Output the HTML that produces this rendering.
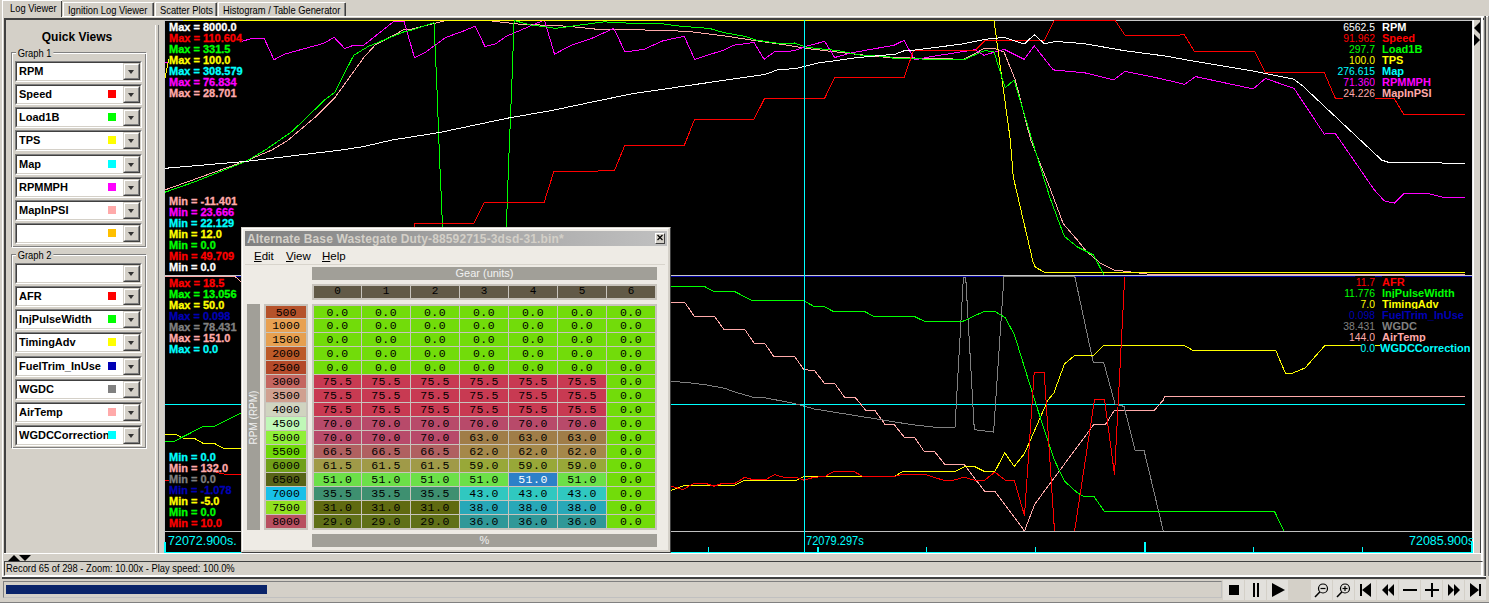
<!DOCTYPE html><html><head><meta charset="utf-8"><style>
html,body{margin:0;padding:0}
body{width:1489px;height:603px;overflow:hidden;background:#D4D0C8;position:relative;font-family:"Liberation Sans",sans-serif;font-size:11px}
body>div{position:absolute}
</style></head><body>
<div style="left:2px;top:0px;width:60px;height:17px;background:#D4D0C8;border-top:1px solid #FFFFFF;border-left:1px solid #FFFFFF;box-sizing:border-box"></div>
<div style="left:61px;top:1px;width:1px;height:16px;background:#404040"></div>
<div style="left:10px;top:2px;height:13px;line-height:13px;white-space:nowrap;font-size:11px;color:#000;transform:scaleX(.85);transform-origin:0 0;">Log Viewer</div>
<div style="left:63px;top:2px;width:90px;height:15px;border-top:1px solid #FFFFFF;border-left:1px solid #FFFFFF;box-sizing:border-box"></div>
<div style="left:153px;top:3px;width:1px;height:14px;background:#404040"></div>
<div style="left:152px;top:3px;width:1px;height:14px;background:#808080"></div>
<div style="left:68px;top:4px;height:13px;line-height:13px;white-space:nowrap;font-size:11px;color:#000;transform:scaleX(.85);transform-origin:0 0;">Ignition Log Viewer</div>
<div style="left:155px;top:2px;width:61px;height:15px;border-top:1px solid #FFFFFF;border-left:1px solid #FFFFFF;box-sizing:border-box"></div>
<div style="left:216px;top:3px;width:1px;height:14px;background:#404040"></div>
<div style="left:215px;top:3px;width:1px;height:14px;background:#808080"></div>
<div style="left:160px;top:4px;height:13px;line-height:13px;white-space:nowrap;font-size:11px;color:#000;transform:scaleX(.85);transform-origin:0 0;">Scatter Plots</div>
<div style="left:218px;top:2px;width:127px;height:15px;border-top:1px solid #FFFFFF;border-left:1px solid #FFFFFF;box-sizing:border-box"></div>
<div style="left:345px;top:3px;width:1px;height:14px;background:#404040"></div>
<div style="left:344px;top:3px;width:1px;height:14px;background:#808080"></div>
<div style="left:223px;top:4px;height:13px;line-height:13px;white-space:nowrap;font-size:11px;color:#000;transform:scaleX(.85);transform-origin:0 0;">Histogram / Table Generator</div>
<div style="left:62px;top:16px;width:1427px;height:1px;background:#FFFFFF"></div>
<div style="left:2px;top:17px;width:1px;height:560px;background:#FFFFFF"></div>
<div style="left:4px;top:18px;width:1482px;height:2px;background:#404040"></div>
<div style="left:4px;top:18px;width:2px;height:535px;background:#404040"></div>
<div style="left:6px;top:30px;height:14px;line-height:14px;white-space:nowrap;font-weight:bold;font-size:12px;width:142px;text-align:center;color:#000">Quick Views</div>
<div style="left:11px;top:52px;width:135px;height:195px;border:1px solid #808080;box-sizing:border-box"></div>
<div style="left:12px;top:53px;width:135px;height:195px;border:1px solid #FFFFFF;box-sizing:border-box;border-right:1px solid #FFFFFF"></div>
<div style="left:11px;top:52px;width:135px;height:195px;border-left:1px solid #808080;border-top:1px solid #808080;box-sizing:border-box"></div>
<div style="left:16px;top:47px;height:13px;line-height:13px;padding:0 2px;background:#D4D0C8;color:#000;transform:scaleX(.85);transform-origin:0 0;">Graph 1</div>
<div style="left:15px;top:61px;width:127px;height:21px;background:#FFFFFF;border-top:1px solid #808080;border-left:1px solid #808080;border-right:1px solid #FFFFFF;border-bottom:1px solid #FFFFFF;box-sizing:border-box"></div>
<div style="left:16px;top:62px;width:125px;height:19px;border-top:1px solid #404040;border-left:1px solid #404040;border-right:1px solid #D4D0C8;border-bottom:1px solid #D4D0C8;box-sizing:border-box"></div>
<div style="left:123px;top:63px;width:17px;height:17px;background:#D4D0C8;border-top:1px solid #D4D0C8;border-left:1px solid #D4D0C8;border-right:1px solid #404040;border-bottom:1px solid #404040;box-sizing:border-box"></div>
<div style="left:124px;top:64px;width:15px;height:15px;border-top:1px solid #FFFFFF;border-left:1px solid #FFFFFF;border-right:1px solid #808080;border-bottom:1px solid #808080;box-sizing:border-box"></div>
<div style="left:128px;top:70px;width:0;height:0;border-left:3.5px solid transparent;border-right:3.5px solid transparent;border-top:4px solid #333"></div>
<div style="left:19px;top:65px;height:13px;line-height:13px;white-space:nowrap;font-weight:bold;color:#000;width:103px;overflow:hidden">RPM</div>
<div style="left:15px;top:84px;width:127px;height:21px;background:#FFFFFF;border-top:1px solid #808080;border-left:1px solid #808080;border-right:1px solid #FFFFFF;border-bottom:1px solid #FFFFFF;box-sizing:border-box"></div>
<div style="left:16px;top:85px;width:125px;height:19px;border-top:1px solid #404040;border-left:1px solid #404040;border-right:1px solid #D4D0C8;border-bottom:1px solid #D4D0C8;box-sizing:border-box"></div>
<div style="left:123px;top:86px;width:17px;height:17px;background:#D4D0C8;border-top:1px solid #D4D0C8;border-left:1px solid #D4D0C8;border-right:1px solid #404040;border-bottom:1px solid #404040;box-sizing:border-box"></div>
<div style="left:124px;top:87px;width:15px;height:15px;border-top:1px solid #FFFFFF;border-left:1px solid #FFFFFF;border-right:1px solid #808080;border-bottom:1px solid #808080;box-sizing:border-box"></div>
<div style="left:128px;top:93px;width:0;height:0;border-left:3.5px solid transparent;border-right:3.5px solid transparent;border-top:4px solid #333"></div>
<div style="left:19px;top:88px;height:13px;line-height:13px;white-space:nowrap;font-weight:bold;color:#000;width:103px;overflow:hidden">Speed</div>
<div style="left:108px;top:90px;width:8px;height:8px;background:#FF0000"></div>
<div style="left:15px;top:107px;width:127px;height:21px;background:#FFFFFF;border-top:1px solid #808080;border-left:1px solid #808080;border-right:1px solid #FFFFFF;border-bottom:1px solid #FFFFFF;box-sizing:border-box"></div>
<div style="left:16px;top:108px;width:125px;height:19px;border-top:1px solid #404040;border-left:1px solid #404040;border-right:1px solid #D4D0C8;border-bottom:1px solid #D4D0C8;box-sizing:border-box"></div>
<div style="left:123px;top:109px;width:17px;height:17px;background:#D4D0C8;border-top:1px solid #D4D0C8;border-left:1px solid #D4D0C8;border-right:1px solid #404040;border-bottom:1px solid #404040;box-sizing:border-box"></div>
<div style="left:124px;top:110px;width:15px;height:15px;border-top:1px solid #FFFFFF;border-left:1px solid #FFFFFF;border-right:1px solid #808080;border-bottom:1px solid #808080;box-sizing:border-box"></div>
<div style="left:128px;top:116px;width:0;height:0;border-left:3.5px solid transparent;border-right:3.5px solid transparent;border-top:4px solid #333"></div>
<div style="left:19px;top:111px;height:13px;line-height:13px;white-space:nowrap;font-weight:bold;color:#000;width:103px;overflow:hidden">Load1B</div>
<div style="left:108px;top:113px;width:8px;height:8px;background:#00FF00"></div>
<div style="left:15px;top:130px;width:127px;height:21px;background:#FFFFFF;border-top:1px solid #808080;border-left:1px solid #808080;border-right:1px solid #FFFFFF;border-bottom:1px solid #FFFFFF;box-sizing:border-box"></div>
<div style="left:16px;top:131px;width:125px;height:19px;border-top:1px solid #404040;border-left:1px solid #404040;border-right:1px solid #D4D0C8;border-bottom:1px solid #D4D0C8;box-sizing:border-box"></div>
<div style="left:123px;top:132px;width:17px;height:17px;background:#D4D0C8;border-top:1px solid #D4D0C8;border-left:1px solid #D4D0C8;border-right:1px solid #404040;border-bottom:1px solid #404040;box-sizing:border-box"></div>
<div style="left:124px;top:133px;width:15px;height:15px;border-top:1px solid #FFFFFF;border-left:1px solid #FFFFFF;border-right:1px solid #808080;border-bottom:1px solid #808080;box-sizing:border-box"></div>
<div style="left:128px;top:139px;width:0;height:0;border-left:3.5px solid transparent;border-right:3.5px solid transparent;border-top:4px solid #333"></div>
<div style="left:19px;top:134px;height:13px;line-height:13px;white-space:nowrap;font-weight:bold;color:#000;width:103px;overflow:hidden">TPS</div>
<div style="left:108px;top:136px;width:8px;height:8px;background:#FFFF00"></div>
<div style="left:15px;top:154px;width:127px;height:21px;background:#FFFFFF;border-top:1px solid #808080;border-left:1px solid #808080;border-right:1px solid #FFFFFF;border-bottom:1px solid #FFFFFF;box-sizing:border-box"></div>
<div style="left:16px;top:155px;width:125px;height:19px;border-top:1px solid #404040;border-left:1px solid #404040;border-right:1px solid #D4D0C8;border-bottom:1px solid #D4D0C8;box-sizing:border-box"></div>
<div style="left:123px;top:156px;width:17px;height:17px;background:#D4D0C8;border-top:1px solid #D4D0C8;border-left:1px solid #D4D0C8;border-right:1px solid #404040;border-bottom:1px solid #404040;box-sizing:border-box"></div>
<div style="left:124px;top:157px;width:15px;height:15px;border-top:1px solid #FFFFFF;border-left:1px solid #FFFFFF;border-right:1px solid #808080;border-bottom:1px solid #808080;box-sizing:border-box"></div>
<div style="left:128px;top:163px;width:0;height:0;border-left:3.5px solid transparent;border-right:3.5px solid transparent;border-top:4px solid #333"></div>
<div style="left:19px;top:158px;height:13px;line-height:13px;white-space:nowrap;font-weight:bold;color:#000;width:103px;overflow:hidden">Map</div>
<div style="left:108px;top:160px;width:8px;height:8px;background:#00FFFF"></div>
<div style="left:15px;top:177px;width:127px;height:21px;background:#FFFFFF;border-top:1px solid #808080;border-left:1px solid #808080;border-right:1px solid #FFFFFF;border-bottom:1px solid #FFFFFF;box-sizing:border-box"></div>
<div style="left:16px;top:178px;width:125px;height:19px;border-top:1px solid #404040;border-left:1px solid #404040;border-right:1px solid #D4D0C8;border-bottom:1px solid #D4D0C8;box-sizing:border-box"></div>
<div style="left:123px;top:179px;width:17px;height:17px;background:#D4D0C8;border-top:1px solid #D4D0C8;border-left:1px solid #D4D0C8;border-right:1px solid #404040;border-bottom:1px solid #404040;box-sizing:border-box"></div>
<div style="left:124px;top:180px;width:15px;height:15px;border-top:1px solid #FFFFFF;border-left:1px solid #FFFFFF;border-right:1px solid #808080;border-bottom:1px solid #808080;box-sizing:border-box"></div>
<div style="left:128px;top:186px;width:0;height:0;border-left:3.5px solid transparent;border-right:3.5px solid transparent;border-top:4px solid #333"></div>
<div style="left:19px;top:181px;height:13px;line-height:13px;white-space:nowrap;font-weight:bold;color:#000;width:103px;overflow:hidden">RPMMPH</div>
<div style="left:108px;top:183px;width:8px;height:8px;background:#FF00FF"></div>
<div style="left:15px;top:200px;width:127px;height:21px;background:#FFFFFF;border-top:1px solid #808080;border-left:1px solid #808080;border-right:1px solid #FFFFFF;border-bottom:1px solid #FFFFFF;box-sizing:border-box"></div>
<div style="left:16px;top:201px;width:125px;height:19px;border-top:1px solid #404040;border-left:1px solid #404040;border-right:1px solid #D4D0C8;border-bottom:1px solid #D4D0C8;box-sizing:border-box"></div>
<div style="left:123px;top:202px;width:17px;height:17px;background:#D4D0C8;border-top:1px solid #D4D0C8;border-left:1px solid #D4D0C8;border-right:1px solid #404040;border-bottom:1px solid #404040;box-sizing:border-box"></div>
<div style="left:124px;top:203px;width:15px;height:15px;border-top:1px solid #FFFFFF;border-left:1px solid #FFFFFF;border-right:1px solid #808080;border-bottom:1px solid #808080;box-sizing:border-box"></div>
<div style="left:128px;top:209px;width:0;height:0;border-left:3.5px solid transparent;border-right:3.5px solid transparent;border-top:4px solid #333"></div>
<div style="left:19px;top:204px;height:13px;line-height:13px;white-space:nowrap;font-weight:bold;color:#000;width:103px;overflow:hidden">MapInPSI</div>
<div style="left:108px;top:206px;width:8px;height:8px;background:#FFAAAA"></div>
<div style="left:15px;top:223px;width:127px;height:21px;background:#FFFFFF;border-top:1px solid #808080;border-left:1px solid #808080;border-right:1px solid #FFFFFF;border-bottom:1px solid #FFFFFF;box-sizing:border-box"></div>
<div style="left:16px;top:224px;width:125px;height:19px;border-top:1px solid #404040;border-left:1px solid #404040;border-right:1px solid #D4D0C8;border-bottom:1px solid #D4D0C8;box-sizing:border-box"></div>
<div style="left:123px;top:225px;width:17px;height:17px;background:#D4D0C8;border-top:1px solid #D4D0C8;border-left:1px solid #D4D0C8;border-right:1px solid #404040;border-bottom:1px solid #404040;box-sizing:border-box"></div>
<div style="left:124px;top:226px;width:15px;height:15px;border-top:1px solid #FFFFFF;border-left:1px solid #FFFFFF;border-right:1px solid #808080;border-bottom:1px solid #808080;box-sizing:border-box"></div>
<div style="left:128px;top:232px;width:0;height:0;border-left:3.5px solid transparent;border-right:3.5px solid transparent;border-top:4px solid #333"></div>
<div style="left:108px;top:229px;width:8px;height:8px;background:#FFC000"></div>
<div style="left:11px;top:254px;width:135px;height:194px;border:1px solid #808080;box-sizing:border-box"></div>
<div style="left:12px;top:255px;width:135px;height:194px;border:1px solid #FFFFFF;box-sizing:border-box;border-right:1px solid #FFFFFF"></div>
<div style="left:11px;top:254px;width:135px;height:194px;border-left:1px solid #808080;border-top:1px solid #808080;box-sizing:border-box"></div>
<div style="left:16px;top:249px;height:13px;line-height:13px;padding:0 2px;background:#D4D0C8;color:#000;transform:scaleX(.85);transform-origin:0 0;">Graph 2</div>
<div style="left:15px;top:263px;width:127px;height:21px;background:#FFFFFF;border-top:1px solid #808080;border-left:1px solid #808080;border-right:1px solid #FFFFFF;border-bottom:1px solid #FFFFFF;box-sizing:border-box"></div>
<div style="left:16px;top:264px;width:125px;height:19px;border-top:1px solid #404040;border-left:1px solid #404040;border-right:1px solid #D4D0C8;border-bottom:1px solid #D4D0C8;box-sizing:border-box"></div>
<div style="left:123px;top:265px;width:17px;height:17px;background:#D4D0C8;border-top:1px solid #D4D0C8;border-left:1px solid #D4D0C8;border-right:1px solid #404040;border-bottom:1px solid #404040;box-sizing:border-box"></div>
<div style="left:124px;top:266px;width:15px;height:15px;border-top:1px solid #FFFFFF;border-left:1px solid #FFFFFF;border-right:1px solid #808080;border-bottom:1px solid #808080;box-sizing:border-box"></div>
<div style="left:128px;top:272px;width:0;height:0;border-left:3.5px solid transparent;border-right:3.5px solid transparent;border-top:4px solid #333"></div>
<div style="left:15px;top:286px;width:127px;height:21px;background:#FFFFFF;border-top:1px solid #808080;border-left:1px solid #808080;border-right:1px solid #FFFFFF;border-bottom:1px solid #FFFFFF;box-sizing:border-box"></div>
<div style="left:16px;top:287px;width:125px;height:19px;border-top:1px solid #404040;border-left:1px solid #404040;border-right:1px solid #D4D0C8;border-bottom:1px solid #D4D0C8;box-sizing:border-box"></div>
<div style="left:123px;top:288px;width:17px;height:17px;background:#D4D0C8;border-top:1px solid #D4D0C8;border-left:1px solid #D4D0C8;border-right:1px solid #404040;border-bottom:1px solid #404040;box-sizing:border-box"></div>
<div style="left:124px;top:289px;width:15px;height:15px;border-top:1px solid #FFFFFF;border-left:1px solid #FFFFFF;border-right:1px solid #808080;border-bottom:1px solid #808080;box-sizing:border-box"></div>
<div style="left:128px;top:295px;width:0;height:0;border-left:3.5px solid transparent;border-right:3.5px solid transparent;border-top:4px solid #333"></div>
<div style="left:19px;top:290px;height:13px;line-height:13px;white-space:nowrap;font-weight:bold;color:#000;width:103px;overflow:hidden">AFR</div>
<div style="left:108px;top:292px;width:8px;height:8px;background:#FF0000"></div>
<div style="left:15px;top:309px;width:127px;height:21px;background:#FFFFFF;border-top:1px solid #808080;border-left:1px solid #808080;border-right:1px solid #FFFFFF;border-bottom:1px solid #FFFFFF;box-sizing:border-box"></div>
<div style="left:16px;top:310px;width:125px;height:19px;border-top:1px solid #404040;border-left:1px solid #404040;border-right:1px solid #D4D0C8;border-bottom:1px solid #D4D0C8;box-sizing:border-box"></div>
<div style="left:123px;top:311px;width:17px;height:17px;background:#D4D0C8;border-top:1px solid #D4D0C8;border-left:1px solid #D4D0C8;border-right:1px solid #404040;border-bottom:1px solid #404040;box-sizing:border-box"></div>
<div style="left:124px;top:312px;width:15px;height:15px;border-top:1px solid #FFFFFF;border-left:1px solid #FFFFFF;border-right:1px solid #808080;border-bottom:1px solid #808080;box-sizing:border-box"></div>
<div style="left:128px;top:318px;width:0;height:0;border-left:3.5px solid transparent;border-right:3.5px solid transparent;border-top:4px solid #333"></div>
<div style="left:19px;top:313px;height:13px;line-height:13px;white-space:nowrap;font-weight:bold;color:#000;width:103px;overflow:hidden">InjPulseWidth</div>
<div style="left:108px;top:315px;width:8px;height:8px;background:#00FF00"></div>
<div style="left:15px;top:332px;width:127px;height:21px;background:#FFFFFF;border-top:1px solid #808080;border-left:1px solid #808080;border-right:1px solid #FFFFFF;border-bottom:1px solid #FFFFFF;box-sizing:border-box"></div>
<div style="left:16px;top:333px;width:125px;height:19px;border-top:1px solid #404040;border-left:1px solid #404040;border-right:1px solid #D4D0C8;border-bottom:1px solid #D4D0C8;box-sizing:border-box"></div>
<div style="left:123px;top:334px;width:17px;height:17px;background:#D4D0C8;border-top:1px solid #D4D0C8;border-left:1px solid #D4D0C8;border-right:1px solid #404040;border-bottom:1px solid #404040;box-sizing:border-box"></div>
<div style="left:124px;top:335px;width:15px;height:15px;border-top:1px solid #FFFFFF;border-left:1px solid #FFFFFF;border-right:1px solid #808080;border-bottom:1px solid #808080;box-sizing:border-box"></div>
<div style="left:128px;top:341px;width:0;height:0;border-left:3.5px solid transparent;border-right:3.5px solid transparent;border-top:4px solid #333"></div>
<div style="left:19px;top:336px;height:13px;line-height:13px;white-space:nowrap;font-weight:bold;color:#000;width:103px;overflow:hidden">TimingAdv</div>
<div style="left:108px;top:338px;width:8px;height:8px;background:#FFFF00"></div>
<div style="left:15px;top:356px;width:127px;height:21px;background:#FFFFFF;border-top:1px solid #808080;border-left:1px solid #808080;border-right:1px solid #FFFFFF;border-bottom:1px solid #FFFFFF;box-sizing:border-box"></div>
<div style="left:16px;top:357px;width:125px;height:19px;border-top:1px solid #404040;border-left:1px solid #404040;border-right:1px solid #D4D0C8;border-bottom:1px solid #D4D0C8;box-sizing:border-box"></div>
<div style="left:123px;top:358px;width:17px;height:17px;background:#D4D0C8;border-top:1px solid #D4D0C8;border-left:1px solid #D4D0C8;border-right:1px solid #404040;border-bottom:1px solid #404040;box-sizing:border-box"></div>
<div style="left:124px;top:359px;width:15px;height:15px;border-top:1px solid #FFFFFF;border-left:1px solid #FFFFFF;border-right:1px solid #808080;border-bottom:1px solid #808080;box-sizing:border-box"></div>
<div style="left:128px;top:365px;width:0;height:0;border-left:3.5px solid transparent;border-right:3.5px solid transparent;border-top:4px solid #333"></div>
<div style="left:19px;top:360px;height:13px;line-height:13px;white-space:nowrap;font-weight:bold;color:#000;width:103px;overflow:hidden">FuelTrim_InUse</div>
<div style="left:108px;top:362px;width:8px;height:8px;background:#0000B4"></div>
<div style="left:15px;top:379px;width:127px;height:21px;background:#FFFFFF;border-top:1px solid #808080;border-left:1px solid #808080;border-right:1px solid #FFFFFF;border-bottom:1px solid #FFFFFF;box-sizing:border-box"></div>
<div style="left:16px;top:380px;width:125px;height:19px;border-top:1px solid #404040;border-left:1px solid #404040;border-right:1px solid #D4D0C8;border-bottom:1px solid #D4D0C8;box-sizing:border-box"></div>
<div style="left:123px;top:381px;width:17px;height:17px;background:#D4D0C8;border-top:1px solid #D4D0C8;border-left:1px solid #D4D0C8;border-right:1px solid #404040;border-bottom:1px solid #404040;box-sizing:border-box"></div>
<div style="left:124px;top:382px;width:15px;height:15px;border-top:1px solid #FFFFFF;border-left:1px solid #FFFFFF;border-right:1px solid #808080;border-bottom:1px solid #808080;box-sizing:border-box"></div>
<div style="left:128px;top:388px;width:0;height:0;border-left:3.5px solid transparent;border-right:3.5px solid transparent;border-top:4px solid #333"></div>
<div style="left:19px;top:383px;height:13px;line-height:13px;white-space:nowrap;font-weight:bold;color:#000;width:103px;overflow:hidden">WGDC</div>
<div style="left:108px;top:385px;width:8px;height:8px;background:#808080"></div>
<div style="left:15px;top:402px;width:127px;height:21px;background:#FFFFFF;border-top:1px solid #808080;border-left:1px solid #808080;border-right:1px solid #FFFFFF;border-bottom:1px solid #FFFFFF;box-sizing:border-box"></div>
<div style="left:16px;top:403px;width:125px;height:19px;border-top:1px solid #404040;border-left:1px solid #404040;border-right:1px solid #D4D0C8;border-bottom:1px solid #D4D0C8;box-sizing:border-box"></div>
<div style="left:123px;top:404px;width:17px;height:17px;background:#D4D0C8;border-top:1px solid #D4D0C8;border-left:1px solid #D4D0C8;border-right:1px solid #404040;border-bottom:1px solid #404040;box-sizing:border-box"></div>
<div style="left:124px;top:405px;width:15px;height:15px;border-top:1px solid #FFFFFF;border-left:1px solid #FFFFFF;border-right:1px solid #808080;border-bottom:1px solid #808080;box-sizing:border-box"></div>
<div style="left:128px;top:411px;width:0;height:0;border-left:3.5px solid transparent;border-right:3.5px solid transparent;border-top:4px solid #333"></div>
<div style="left:19px;top:406px;height:13px;line-height:13px;white-space:nowrap;font-weight:bold;color:#000;width:103px;overflow:hidden">AirTemp</div>
<div style="left:108px;top:408px;width:8px;height:8px;background:#FFAAAA"></div>
<div style="left:15px;top:425px;width:127px;height:21px;background:#FFFFFF;border-top:1px solid #808080;border-left:1px solid #808080;border-right:1px solid #FFFFFF;border-bottom:1px solid #FFFFFF;box-sizing:border-box"></div>
<div style="left:16px;top:426px;width:125px;height:19px;border-top:1px solid #404040;border-left:1px solid #404040;border-right:1px solid #D4D0C8;border-bottom:1px solid #D4D0C8;box-sizing:border-box"></div>
<div style="left:123px;top:427px;width:17px;height:17px;background:#D4D0C8;border-top:1px solid #D4D0C8;border-left:1px solid #D4D0C8;border-right:1px solid #404040;border-bottom:1px solid #404040;box-sizing:border-box"></div>
<div style="left:124px;top:428px;width:15px;height:15px;border-top:1px solid #FFFFFF;border-left:1px solid #FFFFFF;border-right:1px solid #808080;border-bottom:1px solid #808080;box-sizing:border-box"></div>
<div style="left:128px;top:434px;width:0;height:0;border-left:3.5px solid transparent;border-right:3.5px solid transparent;border-top:4px solid #333"></div>
<div style="left:19px;top:429px;height:13px;line-height:13px;white-space:nowrap;font-weight:bold;color:#000;width:103px;overflow:hidden">WGDCCorrection</div>
<div style="left:108px;top:431px;width:8px;height:8px;background:#00FFFF"></div>
<div style="left:155px;top:25px;width:1px;height:528px;background:#FFFFFF"></div>
<div style="left:158px;top:25px;width:1px;height:528px;background:#808080"></div>
<div style="left:165px;top:20px;width:1307px;height:533px;background:#000"></div>
<div style="left:164px;top:20px;width:1px;height:533px;background:#C8C8C8"></div>
<div style="left:165px;top:20px;width:1308px;height:1px;background:#C8C8C8"></div>
<div style="left:165px;top:531px;width:1308px;height:1px;background:#C0C0C0"></div>
<div style="left:165px;top:275px;width:1308px;height:1px;background:#C8C8C8"></div>
<div style="left:165px;top:276px;width:1308px;height:1px;background:#0000A0"></div>
<div style="left:1472px;top:20px;width:1px;height:533px;background:#E8E8E8"></div>
<div style="left:1473px;top:20px;width:1px;height:533px;background:#FFFFFF"></div>
<div style="left:1480px;top:20px;width:1px;height:533px;background:#404040"></div>
<div style="left:1481px;top:16px;width:2px;height:560px;background:#FFFFFF"></div>
<div style="left:1484px;top:16px;width:1px;height:560px;background:#808080"></div>
<div style="left:1488px;top:16px;width:1px;height:560px;background:#808080"></div>
<div style="left:1485px;top:16px;width:1px;height:563px;background:#404040"></div>
<div style="left:165px;top:16px;width:1316px;height:1px;background:#FFFFFF"></div>
<svg style="left:0;top:0;position:absolute" width="1489" height="603" shape-rendering="crispEdges">
<defs><clipPath id="c1"><rect x="165" y="20" width="1300" height="255"/></clipPath><clipPath id="c2"><rect x="165" y="276" width="1300" height="255"/></clipPath></defs>
<polyline points="165.0,189.9 245.9,160.9 272.0,150.0 287.7,140.4 316.8,115.8 334.7,97.9 363.8,57.5 375.0,45.2 404.0,29.6 410.0,29.6 445.8,20.6 488.4,20.6 517.5,24.0 566.8,26.2 600.4,29.6 665.0,30.2 691.4,31.8 727.2,36.3 756.3,40.8 787.7,45.2 807.8,48.6 861.6,54.9 884.0,57.1 915.0,58.0 963.8,59.3 985.0,48.1 995.1,48.6 1004.0,52.0 1015.3,80.0 1030.7,140.0 1049.3,186.4 1063.2,223.6 1077.1,239.8 1086.4,251.4 1100.3,263.0 1114.3,270.0 1149.1,274.2 1465.0,274.5" fill="none" stroke="#FFAAAA" stroke-width="1" clip-path="url(#c1)"/>
<polyline points="165.0,63.0 167.8,62.0 227.2,45.2 254.0,38.0 264.0,38.0 274.0,59.8 284.3,54.2 323.5,43.4 334.2,37.4 344.8,48.6 353.7,45.2 363.8,45.2 394.0,21.3 404.0,21.3 414.5,57.6 425.7,52.0 445.8,37.4 461.5,31.8 475.0,26.2 485.0,46.4 495.1,44.1 506.3,36.3 544.4,20.0 554.5,54.2 571.3,45.2 591.4,38.5 613.8,28.4 625.0,52.0 644.0,49.3 663.0,40.8 684.2,36.3 694.7,59.3 725.0,49.7 733.9,45.2 754.1,42.5 764.1,59.3 774.2,52.0 794.4,50.8 805.6,46.4 824.6,41.4 834.7,57.5 850.4,53.1 894.0,45.2 904.1,40.3 914.5,59.8 932.4,56.4 975.0,49.7 983.9,55.3 1004.0,49.3 1024.2,59.3 1034.3,45.9 1053.3,69.9 1084.7,72.8 1113.8,79.9 1125.0,71.4 1160.0,78.5 1184.6,84.3 1195.6,76.6 1253.1,88.9 1265.4,78.5 1294.1,88.4 1324.2,134.1 1335.2,133.3 1374.3,189.9 1384.3,200.9 1394.2,203.1 1404.1,193.2 1426.2,193.2 1442.8,197.2 1464.9,197.2" fill="none" stroke="#FF00FF" stroke-width="1" clip-path="url(#c1)"/>
<polyline points="165.0,77.7 169.0,58.7 184.0,20.5 994.0,20.5 1010.3,140.0 1013.3,177.1 1033.0,261.9 1035.3,267.2 1044.6,272.3 1465.0,273.0" fill="none" stroke="#FFFF00" stroke-width="1" clip-path="url(#c1)"/>
<polyline points="165.0,192.2 194.8,181.8 245.9,161.4 265.3,150.0 292.0,131.5 325.7,99.0 334.7,92.3 353.7,55.3 368.3,46.4 380.6,41.4 404.0,31.8 410.0,30.7 434.0,22.8 436.9,86.7 439.7,162.0 440.9,188.7 442.5,227.0 444.0,275.0 505.0,275.0 506.3,227.0 507.0,209.6 508.7,160.9 511.9,82.2 514.1,20.6 531.0,25.0 548.9,27.3 555.6,28.4 604.8,21.7 611.6,22.8 660.0,23.5 680.2,26.2 709.3,28.4 725.0,32.9 745.1,36.3 756.3,40.1 780.9,43.7 794.4,43.0 807.8,47.5 839.2,50.8 861.6,55.3 888.4,56.4 893.0,58.2 910.8,58.2 932.4,59.8 963.8,59.8 985.0,50.4 994.0,52.0 1005.2,87.8 1014.1,80.0 1032.0,140.0 1049.3,195.7 1058.6,221.2 1064.4,236.3 1077.1,246.8 1093.4,254.9 1103.8,274.6" fill="none" stroke="#00FF00" stroke-width="1" clip-path="url(#c1)"/>
<polyline points="413.5,230.0 415.0,223.6 473.8,223.1 484.3,202.2 544.2,202.2 553.9,171.3 614.3,170.9 624.7,145.6 684.2,145.6 694.7,119.1 754.1,119.1 764.6,98.3 824.6,98.3 834.7,77.7 904.1,77.7 913.3,50.8 975.0,50.8 985.0,40.3 1044.4,40.3 1054.5,20.0 1114.9,20.0 1125.0,35.2 1184.6,35.0 1194.2,51.1 1254.4,51.1 1265.4,72.5 1324.2,72.5 1335.2,98.0 1394.0,98.0 1403.6,114.1 1465.2,114.1" fill="none" stroke="#FF0000" stroke-width="1" clip-path="url(#c1)"/>
<polyline points="165.0,168.3 245.9,161.4 341.4,150.0 363.8,146.5 392.0,140.0 439.0,132.6 508.5,118.0 553.3,110.2 595.9,101.2 634.0,93.4 665.0,89.0 695.8,84.4 765.3,74.4 778.7,69.4 794.4,68.8 816.8,63.2 857.1,57.6 895.2,54.2 904.1,50.8 915.0,50.0 961.5,44.1 986.1,39.2 1004.0,37.4 1024.2,44.1 1034.3,34.7 1044.4,43.7 1055.6,41.4 1084.7,43.7 1122.8,50.4 1165.0,56.0 1195.6,61.5 1253.1,71.1 1294.1,79.3 1302.3,85.6 1381.7,160.1 1390.0,162.8 1433.7,162.8 1465.2,163.6" fill="none" stroke="#FFFFFF" stroke-width="1" clip-path="url(#c1)"/>
<line x1="165" y1="404.5" x2="1465" y2="404.5" stroke="#00FFFF"/>
<polyline points="165.0,276.5 235.0,276.5 245.0,285.0 600.0,290.0 671.1,302.0 684.4,302.0 694.4,316.4 714.5,316.4 723.8,329.2 744.7,329.2 754.0,343.1 764.5,343.1 773.7,356.4 794.6,356.4 803.9,369.8 814.4,370.3 824.3,383.3 834.6,383.3 844.5,397.2 855.0,397.2 865.8,410.3 874.8,410.3 885.0,424.4 894.0,424.4 904.3,437.3 914.6,437.3 924.1,451.4 934.4,451.4 944.7,464.3 964.0,464.3 984.6,491.3 994.9,491.3 1024.5,531.0 1034.7,504.2 1093.9,424.4 1105.5,424.4 1114.5,410.3 1154.3,410.3 1163.3,400.0 1164.7,396.7 1465.0,396.7" fill="none" stroke="#FFAAAA" stroke-width="1" clip-path="url(#c2)"/>
<polyline points="600.0,370.0 671.1,381.4 687.9,382.6 706.4,384.9 725.0,388.4 734.3,391.9 752.9,397.2 764.5,397.7 794.6,403.5 814.3,409.0 883.8,420.1 910.0,424.4 933.1,427.0 955.0,427.0 963.4,277.0 965.7,277.0 974.3,429.6 993.6,432.1 1004.0,276.5 1074.8,276.5 1093.4,362.9 1103.8,362.9 1115.0,404.0 1124.0,406.4 1135.0,450.2 1144.0,450.2 1163.3,531.0" fill="none" stroke="#808080" stroke-width="1" clip-path="url(#c2)"/>
<polyline points="165.0,434.5 175.7,434.5 183.9,438.4 194.3,438.4 203.3,443.4 214.5,443.4 223.4,448.4 240.6,448.4 300.0,460.0 670.8,490.5 684.4,485.4 734.6,485.4 743.6,480.5 796.3,480.5 804.0,476.6 894.0,476.6 903.0,471.5 955.0,471.5 965.3,466.4 974.3,466.4 984.6,471.5 994.9,471.5 1004.7,452.7 1014.2,466.4 1024.5,453.5 1047.9,400.0 1053.9,393.0 1064.4,364.0 1074.8,355.4 1093.4,355.4 1103.8,345.4 1184.0,345.4 1193.1,350.4 1275.8,350.4 1285.3,373.0 1293.0,373.0 1305.0,368.0 1325.0,345.4 1465.0,345.4" fill="none" stroke="#FFFF00" stroke-width="1" clip-path="url(#c2)"/>
<polyline points="165.0,441.3 174.2,441.3 203.3,426.4 214.5,426.4 240.6,413.3 300.0,390.0 671.1,286.2 704.1,286.2 713.4,291.4 734.3,291.4 752.9,300.9 803.9,300.9 813.2,306.0 823.6,306.0 832.9,311.3 864.3,311.3 873.6,316.4 914.2,316.4 923.9,321.1 963.4,321.1 984.3,311.3 994.7,311.3 1005.2,317.6 1014.5,335.0 1034.6,400.0 1054.0,459.2 1064.3,481.0 1077.2,492.6 1083.6,496.4 1093.9,496.4 1104.2,511.1 1274.4,511.1 1283.8,531.0" fill="none" stroke="#00FF00" stroke-width="1" clip-path="url(#c2)"/>
<polyline points="216.0,472.5 224.0,474.0 241.0,474.0 300.0,480.0 670.8,486.2 683.1,489.5 693.4,483.6 706.3,483.6 714.0,486.2 721.7,483.6 734.6,483.6 744.9,477.2 752.6,479.7 765.5,479.7 774.5,474.6 783.5,477.2 796.3,477.2 804.0,480.2 814.3,477.2 824.6,476.6 834.9,471.0 852.9,471.0 863.2,476.6 894.0,476.6 903.0,474.1 925.4,474.6 943.4,480.2 953.7,480.2 964.0,477.2 974.3,480.2 984.6,480.2 994.9,472.0 1005.2,480.2 1014.2,480.2 1024.5,515.7 1034.2,372.1 1044.2,372.1 1054.5,531.0 1074.6,531.0 1094.5,399.5 1104.5,399.5 1114.5,474.6 1124.7,277.0" fill="none" stroke="#FF0000" stroke-width="1" clip-path="url(#c2)"/>
<polyline points="165.0,480.5 169.0,480.5" fill="none" stroke="#FF0000" stroke-width="1" clip-path="url(#c2)"/>
<line x1="804.5" y1="20" x2="804.5" y2="553" stroke="#00FFFF"/>
<line x1="165" y1="552.5" x2="1473" y2="552.5" stroke="#00FFFF"/>
<line x1="165" y1="542" x2="165" y2="553" stroke="#00FFFF" stroke-width="2"/>
<line x1="708.5" y1="547" x2="708.5" y2="553" stroke="#00FFFF" stroke-width="1"/>
<line x1="817.5" y1="547" x2="817.5" y2="553" stroke="#00FFFF" stroke-width="2"/>
<line x1="926.5" y1="547" x2="926.5" y2="553" stroke="#00FFFF" stroke-width="1"/>
<line x1="1035.5" y1="547" x2="1035.5" y2="553" stroke="#00FFFF" stroke-width="1"/>
<line x1="1144.5" y1="542" x2="1144.5" y2="553" stroke="#00FFFF" stroke-width="2"/>
<line x1="1253.5" y1="547" x2="1253.5" y2="553" stroke="#00FFFF" stroke-width="1"/>
<line x1="1362.5" y1="547" x2="1362.5" y2="553" stroke="#00FFFF" stroke-width="1"/>
<line x1="1472" y1="542" x2="1472" y2="553" stroke="#00FFFF" stroke-width="2"/>
</svg>
<div style="left:169px;top:20.8px;height:13px;line-height:13px;white-space:nowrap;color:#FFFFFF;font-weight:bold;-webkit-text-stroke:0.3px #FFFFFF;background:#000;">Max = 8000.0</div>
<div style="left:169px;top:31.799999999999997px;height:13px;line-height:13px;white-space:nowrap;color:#FF0000;font-weight:bold;-webkit-text-stroke:0.3px #FF0000;background:#000;">Max = 110.604</div>
<div style="left:169px;top:42.8px;height:13px;line-height:13px;white-space:nowrap;color:#00FF00;font-weight:bold;-webkit-text-stroke:0.3px #00FF00;background:#000;">Max = 331.5</div>
<div style="left:169px;top:53.8px;height:13px;line-height:13px;white-space:nowrap;color:#FFFF00;font-weight:bold;-webkit-text-stroke:0.3px #FFFF00;background:#000;">Max = 100.0</div>
<div style="left:169px;top:64.8px;height:13px;line-height:13px;white-space:nowrap;color:#00FFFF;font-weight:bold;-webkit-text-stroke:0.3px #00FFFF;background:#000;">Max = 308.579</div>
<div style="left:169px;top:75.8px;height:13px;line-height:13px;white-space:nowrap;color:#FF00FF;font-weight:bold;-webkit-text-stroke:0.3px #FF00FF;background:#000;">Max = 76.834</div>
<div style="left:169px;top:86.8px;height:13px;line-height:13px;white-space:nowrap;color:#FFAAAA;font-weight:bold;-webkit-text-stroke:0.3px #FFAAAA;background:#000;">Max = 28.701</div>
<div style="left:169px;top:195.3px;height:13px;line-height:13px;white-space:nowrap;color:#FFAAAA;font-weight:bold;-webkit-text-stroke:0.3px #FFAAAA;background:#000;">Min = -11.401</div>
<div style="left:169px;top:206.3px;height:13px;line-height:13px;white-space:nowrap;color:#FF00FF;font-weight:bold;-webkit-text-stroke:0.3px #FF00FF;background:#000;">Min = 23.666</div>
<div style="left:169px;top:217.3px;height:13px;line-height:13px;white-space:nowrap;color:#00FFFF;font-weight:bold;-webkit-text-stroke:0.3px #00FFFF;background:#000;">Min = 22.129</div>
<div style="left:169px;top:228.3px;height:13px;line-height:13px;white-space:nowrap;color:#FFFF00;font-weight:bold;-webkit-text-stroke:0.3px #FFFF00;background:#000;">Min = 12.0</div>
<div style="left:169px;top:239.3px;height:13px;line-height:13px;white-space:nowrap;color:#00FF00;font-weight:bold;-webkit-text-stroke:0.3px #00FF00;background:#000;">Min = 0.0</div>
<div style="left:169px;top:250.3px;height:13px;line-height:13px;white-space:nowrap;color:#FF0000;font-weight:bold;-webkit-text-stroke:0.3px #FF0000;background:#000;">Min = 49.709</div>
<div style="left:169px;top:261.3px;height:13px;line-height:13px;white-space:nowrap;color:#FFFFFF;font-weight:bold;-webkit-text-stroke:0.3px #FFFFFF;background:#000;">Min = 0.0</div>
<div style="left:169px;top:276.5px;height:13px;line-height:13px;white-space:nowrap;color:#FF0000;font-weight:bold;-webkit-text-stroke:0.3px #FF0000;background:#000;">Max = 18.5</div>
<div style="left:169px;top:287.5px;height:13px;line-height:13px;white-space:nowrap;color:#00FF00;font-weight:bold;-webkit-text-stroke:0.3px #00FF00;background:#000;">Max = 13.056</div>
<div style="left:169px;top:298.5px;height:13px;line-height:13px;white-space:nowrap;color:#FFFF00;font-weight:bold;-webkit-text-stroke:0.3px #FFFF00;background:#000;">Max = 50.0</div>
<div style="left:169px;top:309.5px;height:13px;line-height:13px;white-space:nowrap;color:#0000B4;font-weight:bold;-webkit-text-stroke:0.3px #0000B4;background:#000;">Max = 0.098</div>
<div style="left:169px;top:320.5px;height:13px;line-height:13px;white-space:nowrap;color:#808080;font-weight:bold;-webkit-text-stroke:0.3px #808080;background:#000;">Max = 78.431</div>
<div style="left:169px;top:331.5px;height:13px;line-height:13px;white-space:nowrap;color:#FFAAAA;font-weight:bold;-webkit-text-stroke:0.3px #FFAAAA;background:#000;">Max = 151.0</div>
<div style="left:169px;top:342.5px;height:13px;line-height:13px;white-space:nowrap;color:#00FFFF;font-weight:bold;-webkit-text-stroke:0.3px #00FFFF;background:#000;">Max = 0.0</div>
<div style="left:169px;top:451.4px;height:13px;line-height:13px;white-space:nowrap;color:#00FFFF;font-weight:bold;-webkit-text-stroke:0.3px #00FFFF;">Min = 0.0</div>
<div style="left:169px;top:462.4px;height:13px;line-height:13px;white-space:nowrap;color:#FFAAAA;font-weight:bold;-webkit-text-stroke:0.3px #FFAAAA;">Min = 132.0</div>
<div style="left:169px;top:473.4px;height:13px;line-height:13px;white-space:nowrap;color:#808080;font-weight:bold;-webkit-text-stroke:0.3px #808080;">Min = 0.0</div>
<div style="left:169px;top:484.4px;height:13px;line-height:13px;white-space:nowrap;color:#0000B4;font-weight:bold;-webkit-text-stroke:0.3px #0000B4;">Min = -1.078</div>
<div style="left:169px;top:495.4px;height:13px;line-height:13px;white-space:nowrap;color:#FFFF00;font-weight:bold;-webkit-text-stroke:0.3px #FFFF00;">Min = -5.0</div>
<div style="left:169px;top:506.4px;height:13px;line-height:13px;white-space:nowrap;color:#00FF00;font-weight:bold;-webkit-text-stroke:0.3px #00FF00;">Min = 0.0</div>
<div style="left:169px;top:517.4px;height:13px;line-height:13px;white-space:nowrap;color:#FF0000;font-weight:bold;-webkit-text-stroke:0.3px #FF0000;">Min = 10.0</div>
<div style="left:1274.5px;top:20.8px;height:13px;line-height:13px;white-space:nowrap;color:#FFFFFF;width:100px;text-align:right;transform:scaleX(.94);transform-origin:100% 0"><span style="background:#000">6562.5</span></div>
<div style="left:1382px;top:20.8px;height:13px;line-height:13px;white-space:nowrap;color:#FFFFFF;font-weight:bold">RPM</div>
<div style="left:1274.5px;top:31.799999999999997px;height:13px;line-height:13px;white-space:nowrap;color:#FF0000;width:100px;text-align:right;transform:scaleX(.94);transform-origin:100% 0"><span style="background:#000">91.962</span></div>
<div style="left:1382px;top:31.799999999999997px;height:13px;line-height:13px;white-space:nowrap;color:#FF0000;font-weight:bold">Speed</div>
<div style="left:1274.5px;top:42.8px;height:13px;line-height:13px;white-space:nowrap;color:#00FF00;width:100px;text-align:right;transform:scaleX(.94);transform-origin:100% 0"><span style="background:#000">297.7</span></div>
<div style="left:1382px;top:42.8px;height:13px;line-height:13px;white-space:nowrap;color:#00FF00;font-weight:bold">Load1B</div>
<div style="left:1274.5px;top:53.8px;height:13px;line-height:13px;white-space:nowrap;color:#FFFF00;width:100px;text-align:right;transform:scaleX(.94);transform-origin:100% 0"><span style="background:#000">100.0</span></div>
<div style="left:1382px;top:53.8px;height:13px;line-height:13px;white-space:nowrap;color:#FFFF00;font-weight:bold">TPS</div>
<div style="left:1274.5px;top:64.8px;height:13px;line-height:13px;white-space:nowrap;color:#00FFFF;width:100px;text-align:right;transform:scaleX(.94);transform-origin:100% 0"><span style="background:#000">276.615</span></div>
<div style="left:1382px;top:64.8px;height:13px;line-height:13px;white-space:nowrap;color:#00FFFF;font-weight:bold">Map</div>
<div style="left:1274.5px;top:75.8px;height:13px;line-height:13px;white-space:nowrap;color:#FF00FF;width:100px;text-align:right;transform:scaleX(.94);transform-origin:100% 0"><span style="background:#000">71.360</span></div>
<div style="left:1382px;top:75.8px;height:13px;line-height:13px;white-space:nowrap;color:#FF00FF;font-weight:bold">RPMMPH</div>
<div style="left:1274.5px;top:86.8px;height:13px;line-height:13px;white-space:nowrap;color:#FFAAAA;width:100px;text-align:right;transform:scaleX(.94);transform-origin:100% 0"><span style="background:#000">24.226</span></div>
<div style="left:1382px;top:86.8px;height:13px;line-height:13px;white-space:nowrap;color:#FFAAAA;font-weight:bold">MapInPSI</div>
<div style="left:1274.5px;top:276.3px;height:13px;line-height:13px;white-space:nowrap;color:#FF0000;width:100px;text-align:right;transform:scaleX(.94);transform-origin:100% 0"><span style="background:#000">11.7</span></div>
<div style="left:1382px;top:276.3px;height:13px;line-height:13px;white-space:nowrap;color:#FF0000;font-weight:bold;background:#000;max-width:91px;overflow:hidden">AFR</div>
<div style="left:1274.5px;top:287.3px;height:13px;line-height:13px;white-space:nowrap;color:#00FF00;width:100px;text-align:right;transform:scaleX(.94);transform-origin:100% 0"><span style="background:#000">11.776</span></div>
<div style="left:1382px;top:287.3px;height:13px;line-height:13px;white-space:nowrap;color:#00FF00;font-weight:bold;background:#000;max-width:91px;overflow:hidden">InjPulseWidth</div>
<div style="left:1274.5px;top:298.3px;height:13px;line-height:13px;white-space:nowrap;color:#FFFF00;width:100px;text-align:right;transform:scaleX(.94);transform-origin:100% 0"><span style="background:#000">7.0</span></div>
<div style="left:1382px;top:298.3px;height:13px;line-height:13px;white-space:nowrap;color:#FFFF00;font-weight:bold;background:#000;max-width:91px;overflow:hidden">TimingAdv</div>
<div style="left:1274.5px;top:309.3px;height:13px;line-height:13px;white-space:nowrap;color:#0000B4;width:100px;text-align:right;transform:scaleX(.94);transform-origin:100% 0"><span style="background:#000">0.098</span></div>
<div style="left:1382px;top:309.3px;height:13px;line-height:13px;white-space:nowrap;color:#0000B4;font-weight:bold;background:#000;max-width:91px;overflow:hidden">FuelTrim_InUse</div>
<div style="left:1274.5px;top:320.3px;height:13px;line-height:13px;white-space:nowrap;color:#808080;width:100px;text-align:right;transform:scaleX(.94);transform-origin:100% 0"><span style="background:#000">38.431</span></div>
<div style="left:1382px;top:320.3px;height:13px;line-height:13px;white-space:nowrap;color:#808080;font-weight:bold;background:#000;max-width:91px;overflow:hidden">WGDC</div>
<div style="left:1274.5px;top:331.3px;height:13px;line-height:13px;white-space:nowrap;color:#FFAAAA;width:100px;text-align:right;transform:scaleX(.94);transform-origin:100% 0"><span style="background:#000">144.0</span></div>
<div style="left:1382px;top:331.3px;height:13px;line-height:13px;white-space:nowrap;color:#FFAAAA;font-weight:bold;background:#000;max-width:91px;overflow:hidden">AirTemp</div>
<div style="left:1274.5px;top:342.3px;height:13px;line-height:13px;white-space:nowrap;color:#00FFFF;width:100px;text-align:right;transform:scaleX(.94);transform-origin:100% 0"><span style="background:#000">0.0</span></div>
<div style="left:1380px;top:342.3px;height:13px;line-height:13px;white-space:nowrap;color:#00FFFF;font-weight:bold;background:#000;max-width:91px;overflow:hidden">WGDCCorrection</div>
<div style="left:168px;top:534px;height:14px;line-height:14px;white-space:nowrap;color:#00FFFF;font-size:12px;transform:scaleX(1.04);transform-origin:0 0">72072.900s.</div>
<div style="left:806px;top:534px;height:14px;line-height:14px;white-space:nowrap;color:#00FFFF;font-size:12px;transform:scaleX(.92);transform-origin:0 0">72079.297s</div>
<div style="left:1400px;top:534px;width:73px;height:14px;overflow:hidden"><div style="position:absolute;left:9px;top:0;line-height:14px;white-space:nowrap;color:#00FFFF;font-size:12px;transform:scaleX(1.04);transform-origin:0 0">72085.900s.</div></div>
<div style="left:1474px;top:22px;width:0;height:0;border-top:6px solid transparent;border-bottom:6px solid transparent;border-right:6px solid #000"></div>
<div style="left:1474px;top:34px;width:0;height:0;border-top:6px solid transparent;border-bottom:6px solid transparent;border-left:6px solid #000"></div>
<div style="left:4px;top:553px;width:1477px;height:1px;background:#FFFFFF"></div>
<div style="left:8px;top:555px;width:0;height:0;border-left:6px solid transparent;border-right:6px solid transparent;border-bottom:6px solid #000"></div>
<div style="left:19px;top:555px;width:0;height:0;border-left:6px solid transparent;border-right:6px solid transparent;border-top:6px solid #000"></div>
<div style="left:4px;top:561px;width:1479px;height:15px;border-top:1px solid #404040;border-left:1px solid #404040;border-right:1px solid #FFFFFF;border-bottom:1px solid #FFFFFF;box-sizing:border-box"></div>
<div style="left:6px;top:561px;height:14px;line-height:14px;white-space:nowrap;color:#000;transform:scaleX(.85);transform-origin:0 0;">Record 65 of 298 - Zoom: 10.00x - Play speed: 100.0%</div>
<div style="left:2px;top:576px;width:1484px;height:1px;background:#FFFFFF"></div>
<div style="left:2px;top:577px;width:1483px;height:2px;background:#404040"></div>
<div style="left:3px;top:581px;width:1219px;height:17px;border-top:1px solid #808080;border-left:1px solid #808080;border-right:1px solid #C0C0C0;border-bottom:1px solid #C0C0C0;box-sizing:border-box"></div>
<div style="left:0px;top:602px;width:1489px;height:1px;background:#808080"></div>
<div style="left:6px;top:585px;width:261px;height:9px;background:#0A246A"></div>
<div style="left:1223px;top:580px;width:21px;height:20px;background:#E2E0DC"></div>
<div style="left:1245px;top:580px;width:21px;height:20px;background:#E2E0DC"></div>
<div style="left:1267px;top:580px;width:21px;height:20px;background:#E2E0DC"></div>
<div style="left:1311px;top:580px;width:21px;height:20px;background:#E2E0DC"></div>
<div style="left:1333px;top:580px;width:21px;height:20px;background:#E2E0DC"></div>
<div style="left:1355px;top:580px;width:21px;height:20px;background:#E2E0DC"></div>
<div style="left:1377px;top:580px;width:21px;height:20px;background:#E2E0DC"></div>
<div style="left:1399px;top:580px;width:21px;height:20px;background:#E2E0DC"></div>
<div style="left:1421px;top:580px;width:21px;height:20px;background:#E2E0DC"></div>
<div style="left:1443px;top:580px;width:21px;height:20px;background:#E2E0DC"></div>
<div style="left:1465px;top:580px;width:21px;height:20px;background:#E2E0DC"></div>
<div style="left:1229px;top:585px;width:10px;height:10px;background:#000"></div>
<div style="left:1253px;top:583px;width:2px;height:14px;background:#000"></div>
<div style="left:1257px;top:583px;width:2px;height:14px;background:#000"></div>
<div style="left:1272px;top:583px;width:0;height:0;border-top:7px solid transparent;border-bottom:7px solid transparent;border-left:13px solid #000"></div>
<svg style="left:1311px;top:580px;position:absolute" width="21" height="20"><circle cx="12" cy="8.5" r="4.5" fill="none" stroke="#000" stroke-width="1.2"/><line x1="9.5" y1="8.5" x2="14.5" y2="8.5" stroke="#000" stroke-width="1.2"/><line x1="4" y1="17" x2="8.8" y2="12" stroke="#000" stroke-width="1.5"/></svg>
<svg style="left:1333px;top:580px;position:absolute" width="21" height="20"><circle cx="12" cy="8.5" r="4.5" fill="none" stroke="#000" stroke-width="1.2"/><line x1="9.5" y1="8.5" x2="14.5" y2="8.5" stroke="#000" stroke-width="1.2"/><line x1="12" y1="6" x2="12" y2="11" stroke="#000" stroke-width="1.2"/><line x1="4" y1="17" x2="8.8" y2="12" stroke="#000" stroke-width="1.5"/></svg>
<div style="left:1360px;top:584px;width:2px;height:12px;background:#000"></div>
<div style="left:1362px;top:583px;width:0;height:0;border-top:7px solid transparent;border-bottom:7px solid transparent;border-right:9px solid #000"></div>
<div style="left:1382px;top:584px;width:0;height:0;border-top:6px solid transparent;border-bottom:6px solid transparent;border-right:6px solid #000"></div>
<div style="left:1388px;top:584px;width:0;height:0;border-top:6px solid transparent;border-bottom:6px solid transparent;border-right:6px solid #000"></div>
<div style="left:1403px;top:589px;width:14px;height:2px;background:#000"></div>
<div style="left:1425px;top:589px;width:14px;height:2px;background:#000"></div>
<div style="left:1431px;top:583px;width:2px;height:14px;background:#000"></div>
<div style="left:1448px;top:584px;width:0;height:0;border-top:6px solid transparent;border-bottom:6px solid transparent;border-left:6px solid #000"></div>
<div style="left:1454px;top:584px;width:0;height:0;border-top:6px solid transparent;border-bottom:6px solid transparent;border-left:6px solid #000"></div>
<div style="left:1470px;top:583px;width:0;height:0;border-top:7px solid transparent;border-bottom:7px solid transparent;border-left:9px solid #000"></div>
<div style="left:1479px;top:584px;width:2px;height:12px;background:#000"></div>
<div style="left:241px;top:227px;width:430px;height:326px;background:#EEEBE5;border-top:1px solid #D4D0C8;border-left:1px solid #D4D0C8;border-right:1px solid #404040;border-bottom:1px solid #404040;box-sizing:border-box"></div>
<div style="left:242px;top:228px;width:428px;height:324px;border-top:1px solid #FFFFFF;border-left:1px solid #FFFFFF;border-right:2px solid #D4D0C8;border-bottom:2px solid #D4D0C8;box-sizing:border-box"></div>
<div style="left:245px;top:231px;width:422px;height:15px;background:linear-gradient(to right,#808080 0%,#A0A0A0 45%,#C0C0C0 100%)"></div>
<div style="left:247px;top:231.5px;height:14px;line-height:14px;white-space:nowrap;color:#D4D0C8;font-weight:bold;font-size:12px;letter-spacing:0.14px">Alternate Base Wastegate Duty-88592715-3dsd-31.bin*</div>
<div style="left:655px;top:233px;width:10px;height:11px;background:#D4D0C8;border-top:1px solid #FFFFFF;border-left:1px solid #FFFFFF;border-right:1px solid #404040;border-bottom:1px solid #404040;box-sizing:border-box"></div>
<svg style="position:absolute;left:655px;top:233px" width="10" height="11"><path d="M2.5 2 L7.5 7 M7.5 2 L2.5 7" stroke="#000" stroke-width="1.2"/></svg>
<div style="left:254px;top:249px;height:14px;line-height:14px;white-space:nowrap;color:#000;font-size:11.5px"><u>E</u>dit</div>
<div style="left:286px;top:249px;height:14px;line-height:14px;white-space:nowrap;color:#000;font-size:11.5px"><u>V</u>iew</div>
<div style="left:322px;top:249px;height:14px;line-height:14px;white-space:nowrap;color:#000;font-size:11.5px"><u>H</u>elp</div>
<div style="left:245px;top:264px;width:420px;height:1px;background:#D8D4CC"></div>
<div style="left:312px;top:267px;width:345px;height:13px;background:#A19F98"></div>
<div style="left:312px;top:267px;height:13px;line-height:13px;white-space:nowrap;color:#F0F0F0;width:345px;text-align:center">Gear (units)</div>
<div style="left:312px;top:284px;width:345px;height:16px;background:#C8C4BC"></div>
<div style="left:314px;top:286px;width:47px;height:12px;background:#625A47"></div>
<div style="left:314px;top:285px;height:13px;line-height:13px;white-space:nowrap;color:#000;font-family:Liberation Mono,monospace;font-size:11px;width:47px;text-align:center">0</div>
<div style="left:362px;top:286px;width:48px;height:12px;background:#625A47"></div>
<div style="left:362px;top:285px;height:13px;line-height:13px;white-space:nowrap;color:#000;font-family:Liberation Mono,monospace;font-size:11px;width:48px;text-align:center">1</div>
<div style="left:411px;top:286px;width:48px;height:12px;background:#625A47"></div>
<div style="left:411px;top:285px;height:13px;line-height:13px;white-space:nowrap;color:#000;font-family:Liberation Mono,monospace;font-size:11px;width:48px;text-align:center">2</div>
<div style="left:460px;top:286px;width:48px;height:12px;background:#625A47"></div>
<div style="left:460px;top:285px;height:13px;line-height:13px;white-space:nowrap;color:#000;font-family:Liberation Mono,monospace;font-size:11px;width:48px;text-align:center">3</div>
<div style="left:509px;top:286px;width:48px;height:12px;background:#625A47"></div>
<div style="left:509px;top:285px;height:13px;line-height:13px;white-space:nowrap;color:#000;font-family:Liberation Mono,monospace;font-size:11px;width:48px;text-align:center">4</div>
<div style="left:558px;top:286px;width:48px;height:12px;background:#625A47"></div>
<div style="left:558px;top:285px;height:13px;line-height:13px;white-space:nowrap;color:#000;font-family:Liberation Mono,monospace;font-size:11px;width:48px;text-align:center">5</div>
<div style="left:607px;top:286px;width:48px;height:12px;background:#625A47"></div>
<div style="left:607px;top:285px;height:13px;line-height:13px;white-space:nowrap;color:#000;font-family:Liberation Mono,monospace;font-size:11px;width:48px;text-align:center">6</div>
<div style="left:247px;top:304px;width:13px;height:226px;background:#A19F98"></div>
<div style="left:247px;top:304px;width:13px;height:226px;display:flex;align-items:center;justify-content:center"><div style="transform:rotate(-90deg);white-space:nowrap;color:#F0F0F0;font-size:10px;line-height:13px">RPM (RPM)</div></div>
<div style="left:264px;top:304px;width:44px;height:226px;background:#C8C4BC"></div>
<div style="left:266px;top:306px;width:40px;height:12px;background:#B5522A"></div>
<div style="left:266px;top:306px;height:13px;line-height:13px;white-space:nowrap;color:#000;font-family:Liberation Mono,monospace;font-size:11.5px;width:40px;text-align:center">500</div>
<div style="left:266px;top:319px;width:40px;height:13px;background:#E8A152"></div>
<div style="left:266px;top:319px;height:13px;line-height:13px;white-space:nowrap;color:#000;font-family:Liberation Mono,monospace;font-size:11.5px;width:40px;text-align:center">1000</div>
<div style="left:266px;top:333px;width:40px;height:13px;background:#E6A050"></div>
<div style="left:266px;top:333px;height:13px;line-height:13px;white-space:nowrap;color:#000;font-family:Liberation Mono,monospace;font-size:11.5px;width:40px;text-align:center">1500</div>
<div style="left:266px;top:347px;width:40px;height:13px;background:#BC5A28"></div>
<div style="left:266px;top:347px;height:13px;line-height:13px;white-space:nowrap;color:#000;font-family:Liberation Mono,monospace;font-size:11.5px;width:40px;text-align:center">2000</div>
<div style="left:266px;top:361px;width:40px;height:13px;background:#B44A2A"></div>
<div style="left:266px;top:361px;height:13px;line-height:13px;white-space:nowrap;color:#000;font-family:Liberation Mono,monospace;font-size:11.5px;width:40px;text-align:center">2500</div>
<div style="left:266px;top:375px;width:40px;height:13px;background:#C46660"></div>
<div style="left:266px;top:375px;height:13px;line-height:13px;white-space:nowrap;color:#000;font-family:Liberation Mono,monospace;font-size:11.5px;width:40px;text-align:center">3000</div>
<div style="left:266px;top:389px;width:40px;height:13px;background:#D0A090"></div>
<div style="left:266px;top:389px;height:13px;line-height:13px;white-space:nowrap;color:#000;font-family:Liberation Mono,monospace;font-size:11.5px;width:40px;text-align:center">3500</div>
<div style="left:266px;top:403px;width:40px;height:13px;background:#D0D4C0"></div>
<div style="left:266px;top:403px;height:13px;line-height:13px;white-space:nowrap;color:#000;font-family:Liberation Mono,monospace;font-size:11.5px;width:40px;text-align:center">4000</div>
<div style="left:266px;top:417px;width:40px;height:13px;background:#C0F8B8"></div>
<div style="left:266px;top:417px;height:13px;line-height:13px;white-space:nowrap;color:#000;font-family:Liberation Mono,monospace;font-size:11.5px;width:40px;text-align:center">4500</div>
<div style="left:266px;top:431px;width:40px;height:13px;background:#90F038"></div>
<div style="left:266px;top:431px;height:13px;line-height:13px;white-space:nowrap;color:#000;font-family:Liberation Mono,monospace;font-size:11.5px;width:40px;text-align:center">5000</div>
<div style="left:266px;top:445px;width:40px;height:13px;background:#70D808"></div>
<div style="left:266px;top:445px;height:13px;line-height:13px;white-space:nowrap;color:#000;font-family:Liberation Mono,monospace;font-size:11.5px;width:40px;text-align:center">5500</div>
<div style="left:266px;top:459px;width:40px;height:13px;background:#70A018"></div>
<div style="left:266px;top:459px;height:13px;line-height:13px;white-space:nowrap;color:#000;font-family:Liberation Mono,monospace;font-size:11.5px;width:40px;text-align:center">6000</div>
<div style="left:266px;top:473px;width:40px;height:13px;background:#586418"></div>
<div style="left:266px;top:473px;height:13px;line-height:13px;white-space:nowrap;color:#000;font-family:Liberation Mono,monospace;font-size:11.5px;width:40px;text-align:center">6500</div>
<div style="left:266px;top:487px;width:40px;height:13px;background:#18C0E8"></div>
<div style="left:266px;top:487px;height:13px;line-height:13px;white-space:nowrap;color:#000;font-family:Liberation Mono,monospace;font-size:11.5px;width:40px;text-align:center">7000</div>
<div style="left:266px;top:501px;width:40px;height:13px;background:#90E020"></div>
<div style="left:266px;top:501px;height:13px;line-height:13px;white-space:nowrap;color:#000;font-family:Liberation Mono,monospace;font-size:11.5px;width:40px;text-align:center">7500</div>
<div style="left:266px;top:515px;width:40px;height:13px;background:#B85060"></div>
<div style="left:266px;top:515px;height:13px;line-height:13px;white-space:nowrap;color:#000;font-family:Liberation Mono,monospace;font-size:11.5px;width:40px;text-align:center">8000</div>
<div style="left:312px;top:304px;width:345px;height:226px;background:#C8C4BC"></div>
<div style="left:314px;top:306px;width:47px;height:12px;background:#72DC0A"></div>
<div style="left:314px;top:306px;height:13px;line-height:13px;white-space:nowrap;color:#000;font-family:Liberation Mono,monospace;font-size:11.5px;width:47px;text-align:center;letter-spacing:0.5px">0.0</div>
<div style="left:362px;top:306px;width:48px;height:12px;background:#72DC0A"></div>
<div style="left:362px;top:306px;height:13px;line-height:13px;white-space:nowrap;color:#000;font-family:Liberation Mono,monospace;font-size:11.5px;width:48px;text-align:center;letter-spacing:0.5px">0.0</div>
<div style="left:411px;top:306px;width:48px;height:12px;background:#72DC0A"></div>
<div style="left:411px;top:306px;height:13px;line-height:13px;white-space:nowrap;color:#000;font-family:Liberation Mono,monospace;font-size:11.5px;width:48px;text-align:center;letter-spacing:0.5px">0.0</div>
<div style="left:460px;top:306px;width:48px;height:12px;background:#72DC0A"></div>
<div style="left:460px;top:306px;height:13px;line-height:13px;white-space:nowrap;color:#000;font-family:Liberation Mono,monospace;font-size:11.5px;width:48px;text-align:center;letter-spacing:0.5px">0.0</div>
<div style="left:509px;top:306px;width:48px;height:12px;background:#72DC0A"></div>
<div style="left:509px;top:306px;height:13px;line-height:13px;white-space:nowrap;color:#000;font-family:Liberation Mono,monospace;font-size:11.5px;width:48px;text-align:center;letter-spacing:0.5px">0.0</div>
<div style="left:558px;top:306px;width:48px;height:12px;background:#72DC0A"></div>
<div style="left:558px;top:306px;height:13px;line-height:13px;white-space:nowrap;color:#000;font-family:Liberation Mono,monospace;font-size:11.5px;width:48px;text-align:center;letter-spacing:0.5px">0.0</div>
<div style="left:607px;top:306px;width:48px;height:12px;background:#72DC0A"></div>
<div style="left:607px;top:306px;height:13px;line-height:13px;white-space:nowrap;color:#000;font-family:Liberation Mono,monospace;font-size:11.5px;width:48px;text-align:center;letter-spacing:0.5px">0.0</div>
<div style="left:314px;top:319px;width:47px;height:13px;background:#72DC0A"></div>
<div style="left:314px;top:319px;height:13px;line-height:13px;white-space:nowrap;color:#000;font-family:Liberation Mono,monospace;font-size:11.5px;width:47px;text-align:center;letter-spacing:0.5px">0.0</div>
<div style="left:362px;top:319px;width:48px;height:13px;background:#72DC0A"></div>
<div style="left:362px;top:319px;height:13px;line-height:13px;white-space:nowrap;color:#000;font-family:Liberation Mono,monospace;font-size:11.5px;width:48px;text-align:center;letter-spacing:0.5px">0.0</div>
<div style="left:411px;top:319px;width:48px;height:13px;background:#72DC0A"></div>
<div style="left:411px;top:319px;height:13px;line-height:13px;white-space:nowrap;color:#000;font-family:Liberation Mono,monospace;font-size:11.5px;width:48px;text-align:center;letter-spacing:0.5px">0.0</div>
<div style="left:460px;top:319px;width:48px;height:13px;background:#72DC0A"></div>
<div style="left:460px;top:319px;height:13px;line-height:13px;white-space:nowrap;color:#000;font-family:Liberation Mono,monospace;font-size:11.5px;width:48px;text-align:center;letter-spacing:0.5px">0.0</div>
<div style="left:509px;top:319px;width:48px;height:13px;background:#72DC0A"></div>
<div style="left:509px;top:319px;height:13px;line-height:13px;white-space:nowrap;color:#000;font-family:Liberation Mono,monospace;font-size:11.5px;width:48px;text-align:center;letter-spacing:0.5px">0.0</div>
<div style="left:558px;top:319px;width:48px;height:13px;background:#72DC0A"></div>
<div style="left:558px;top:319px;height:13px;line-height:13px;white-space:nowrap;color:#000;font-family:Liberation Mono,monospace;font-size:11.5px;width:48px;text-align:center;letter-spacing:0.5px">0.0</div>
<div style="left:607px;top:319px;width:48px;height:13px;background:#72DC0A"></div>
<div style="left:607px;top:319px;height:13px;line-height:13px;white-space:nowrap;color:#000;font-family:Liberation Mono,monospace;font-size:11.5px;width:48px;text-align:center;letter-spacing:0.5px">0.0</div>
<div style="left:314px;top:333px;width:47px;height:13px;background:#72DC0A"></div>
<div style="left:314px;top:333px;height:13px;line-height:13px;white-space:nowrap;color:#000;font-family:Liberation Mono,monospace;font-size:11.5px;width:47px;text-align:center;letter-spacing:0.5px">0.0</div>
<div style="left:362px;top:333px;width:48px;height:13px;background:#72DC0A"></div>
<div style="left:362px;top:333px;height:13px;line-height:13px;white-space:nowrap;color:#000;font-family:Liberation Mono,monospace;font-size:11.5px;width:48px;text-align:center;letter-spacing:0.5px">0.0</div>
<div style="left:411px;top:333px;width:48px;height:13px;background:#72DC0A"></div>
<div style="left:411px;top:333px;height:13px;line-height:13px;white-space:nowrap;color:#000;font-family:Liberation Mono,monospace;font-size:11.5px;width:48px;text-align:center;letter-spacing:0.5px">0.0</div>
<div style="left:460px;top:333px;width:48px;height:13px;background:#72DC0A"></div>
<div style="left:460px;top:333px;height:13px;line-height:13px;white-space:nowrap;color:#000;font-family:Liberation Mono,monospace;font-size:11.5px;width:48px;text-align:center;letter-spacing:0.5px">0.0</div>
<div style="left:509px;top:333px;width:48px;height:13px;background:#72DC0A"></div>
<div style="left:509px;top:333px;height:13px;line-height:13px;white-space:nowrap;color:#000;font-family:Liberation Mono,monospace;font-size:11.5px;width:48px;text-align:center;letter-spacing:0.5px">0.0</div>
<div style="left:558px;top:333px;width:48px;height:13px;background:#72DC0A"></div>
<div style="left:558px;top:333px;height:13px;line-height:13px;white-space:nowrap;color:#000;font-family:Liberation Mono,monospace;font-size:11.5px;width:48px;text-align:center;letter-spacing:0.5px">0.0</div>
<div style="left:607px;top:333px;width:48px;height:13px;background:#72DC0A"></div>
<div style="left:607px;top:333px;height:13px;line-height:13px;white-space:nowrap;color:#000;font-family:Liberation Mono,monospace;font-size:11.5px;width:48px;text-align:center;letter-spacing:0.5px">0.0</div>
<div style="left:314px;top:347px;width:47px;height:13px;background:#72DC0A"></div>
<div style="left:314px;top:347px;height:13px;line-height:13px;white-space:nowrap;color:#000;font-family:Liberation Mono,monospace;font-size:11.5px;width:47px;text-align:center;letter-spacing:0.5px">0.0</div>
<div style="left:362px;top:347px;width:48px;height:13px;background:#72DC0A"></div>
<div style="left:362px;top:347px;height:13px;line-height:13px;white-space:nowrap;color:#000;font-family:Liberation Mono,monospace;font-size:11.5px;width:48px;text-align:center;letter-spacing:0.5px">0.0</div>
<div style="left:411px;top:347px;width:48px;height:13px;background:#72DC0A"></div>
<div style="left:411px;top:347px;height:13px;line-height:13px;white-space:nowrap;color:#000;font-family:Liberation Mono,monospace;font-size:11.5px;width:48px;text-align:center;letter-spacing:0.5px">0.0</div>
<div style="left:460px;top:347px;width:48px;height:13px;background:#72DC0A"></div>
<div style="left:460px;top:347px;height:13px;line-height:13px;white-space:nowrap;color:#000;font-family:Liberation Mono,monospace;font-size:11.5px;width:48px;text-align:center;letter-spacing:0.5px">0.0</div>
<div style="left:509px;top:347px;width:48px;height:13px;background:#72DC0A"></div>
<div style="left:509px;top:347px;height:13px;line-height:13px;white-space:nowrap;color:#000;font-family:Liberation Mono,monospace;font-size:11.5px;width:48px;text-align:center;letter-spacing:0.5px">0.0</div>
<div style="left:558px;top:347px;width:48px;height:13px;background:#72DC0A"></div>
<div style="left:558px;top:347px;height:13px;line-height:13px;white-space:nowrap;color:#000;font-family:Liberation Mono,monospace;font-size:11.5px;width:48px;text-align:center;letter-spacing:0.5px">0.0</div>
<div style="left:607px;top:347px;width:48px;height:13px;background:#72DC0A"></div>
<div style="left:607px;top:347px;height:13px;line-height:13px;white-space:nowrap;color:#000;font-family:Liberation Mono,monospace;font-size:11.5px;width:48px;text-align:center;letter-spacing:0.5px">0.0</div>
<div style="left:314px;top:361px;width:47px;height:13px;background:#72DC0A"></div>
<div style="left:314px;top:361px;height:13px;line-height:13px;white-space:nowrap;color:#000;font-family:Liberation Mono,monospace;font-size:11.5px;width:47px;text-align:center;letter-spacing:0.5px">0.0</div>
<div style="left:362px;top:361px;width:48px;height:13px;background:#72DC0A"></div>
<div style="left:362px;top:361px;height:13px;line-height:13px;white-space:nowrap;color:#000;font-family:Liberation Mono,monospace;font-size:11.5px;width:48px;text-align:center;letter-spacing:0.5px">0.0</div>
<div style="left:411px;top:361px;width:48px;height:13px;background:#72DC0A"></div>
<div style="left:411px;top:361px;height:13px;line-height:13px;white-space:nowrap;color:#000;font-family:Liberation Mono,monospace;font-size:11.5px;width:48px;text-align:center;letter-spacing:0.5px">0.0</div>
<div style="left:460px;top:361px;width:48px;height:13px;background:#72DC0A"></div>
<div style="left:460px;top:361px;height:13px;line-height:13px;white-space:nowrap;color:#000;font-family:Liberation Mono,monospace;font-size:11.5px;width:48px;text-align:center;letter-spacing:0.5px">0.0</div>
<div style="left:509px;top:361px;width:48px;height:13px;background:#72DC0A"></div>
<div style="left:509px;top:361px;height:13px;line-height:13px;white-space:nowrap;color:#000;font-family:Liberation Mono,monospace;font-size:11.5px;width:48px;text-align:center;letter-spacing:0.5px">0.0</div>
<div style="left:558px;top:361px;width:48px;height:13px;background:#72DC0A"></div>
<div style="left:558px;top:361px;height:13px;line-height:13px;white-space:nowrap;color:#000;font-family:Liberation Mono,monospace;font-size:11.5px;width:48px;text-align:center;letter-spacing:0.5px">0.0</div>
<div style="left:607px;top:361px;width:48px;height:13px;background:#72DC0A"></div>
<div style="left:607px;top:361px;height:13px;line-height:13px;white-space:nowrap;color:#000;font-family:Liberation Mono,monospace;font-size:11.5px;width:48px;text-align:center;letter-spacing:0.5px">0.0</div>
<div style="left:314px;top:375px;width:47px;height:13px;background:#C83A52"></div>
<div style="left:314px;top:375px;height:13px;line-height:13px;white-space:nowrap;color:#000;font-family:Liberation Mono,monospace;font-size:11.5px;width:47px;text-align:center;letter-spacing:0.5px">75.5</div>
<div style="left:362px;top:375px;width:48px;height:13px;background:#C83A52"></div>
<div style="left:362px;top:375px;height:13px;line-height:13px;white-space:nowrap;color:#000;font-family:Liberation Mono,monospace;font-size:11.5px;width:48px;text-align:center;letter-spacing:0.5px">75.5</div>
<div style="left:411px;top:375px;width:48px;height:13px;background:#C83A52"></div>
<div style="left:411px;top:375px;height:13px;line-height:13px;white-space:nowrap;color:#000;font-family:Liberation Mono,monospace;font-size:11.5px;width:48px;text-align:center;letter-spacing:0.5px">75.5</div>
<div style="left:460px;top:375px;width:48px;height:13px;background:#C83A52"></div>
<div style="left:460px;top:375px;height:13px;line-height:13px;white-space:nowrap;color:#000;font-family:Liberation Mono,monospace;font-size:11.5px;width:48px;text-align:center;letter-spacing:0.5px">75.5</div>
<div style="left:509px;top:375px;width:48px;height:13px;background:#C83A52"></div>
<div style="left:509px;top:375px;height:13px;line-height:13px;white-space:nowrap;color:#000;font-family:Liberation Mono,monospace;font-size:11.5px;width:48px;text-align:center;letter-spacing:0.5px">75.5</div>
<div style="left:558px;top:375px;width:48px;height:13px;background:#C83A52"></div>
<div style="left:558px;top:375px;height:13px;line-height:13px;white-space:nowrap;color:#000;font-family:Liberation Mono,monospace;font-size:11.5px;width:48px;text-align:center;letter-spacing:0.5px">75.5</div>
<div style="left:607px;top:375px;width:48px;height:13px;background:#72DC0A"></div>
<div style="left:607px;top:375px;height:13px;line-height:13px;white-space:nowrap;color:#000;font-family:Liberation Mono,monospace;font-size:11.5px;width:48px;text-align:center;letter-spacing:0.5px">0.0</div>
<div style="left:314px;top:389px;width:47px;height:13px;background:#C83A52"></div>
<div style="left:314px;top:389px;height:13px;line-height:13px;white-space:nowrap;color:#000;font-family:Liberation Mono,monospace;font-size:11.5px;width:47px;text-align:center;letter-spacing:0.5px">75.5</div>
<div style="left:362px;top:389px;width:48px;height:13px;background:#C83A52"></div>
<div style="left:362px;top:389px;height:13px;line-height:13px;white-space:nowrap;color:#000;font-family:Liberation Mono,monospace;font-size:11.5px;width:48px;text-align:center;letter-spacing:0.5px">75.5</div>
<div style="left:411px;top:389px;width:48px;height:13px;background:#C83A52"></div>
<div style="left:411px;top:389px;height:13px;line-height:13px;white-space:nowrap;color:#000;font-family:Liberation Mono,monospace;font-size:11.5px;width:48px;text-align:center;letter-spacing:0.5px">75.5</div>
<div style="left:460px;top:389px;width:48px;height:13px;background:#C83A52"></div>
<div style="left:460px;top:389px;height:13px;line-height:13px;white-space:nowrap;color:#000;font-family:Liberation Mono,monospace;font-size:11.5px;width:48px;text-align:center;letter-spacing:0.5px">75.5</div>
<div style="left:509px;top:389px;width:48px;height:13px;background:#C83A52"></div>
<div style="left:509px;top:389px;height:13px;line-height:13px;white-space:nowrap;color:#000;font-family:Liberation Mono,monospace;font-size:11.5px;width:48px;text-align:center;letter-spacing:0.5px">75.5</div>
<div style="left:558px;top:389px;width:48px;height:13px;background:#C83A52"></div>
<div style="left:558px;top:389px;height:13px;line-height:13px;white-space:nowrap;color:#000;font-family:Liberation Mono,monospace;font-size:11.5px;width:48px;text-align:center;letter-spacing:0.5px">75.5</div>
<div style="left:607px;top:389px;width:48px;height:13px;background:#72DC0A"></div>
<div style="left:607px;top:389px;height:13px;line-height:13px;white-space:nowrap;color:#000;font-family:Liberation Mono,monospace;font-size:11.5px;width:48px;text-align:center;letter-spacing:0.5px">0.0</div>
<div style="left:314px;top:403px;width:47px;height:13px;background:#C83A52"></div>
<div style="left:314px;top:403px;height:13px;line-height:13px;white-space:nowrap;color:#000;font-family:Liberation Mono,monospace;font-size:11.5px;width:47px;text-align:center;letter-spacing:0.5px">75.5</div>
<div style="left:362px;top:403px;width:48px;height:13px;background:#C83A52"></div>
<div style="left:362px;top:403px;height:13px;line-height:13px;white-space:nowrap;color:#000;font-family:Liberation Mono,monospace;font-size:11.5px;width:48px;text-align:center;letter-spacing:0.5px">75.5</div>
<div style="left:411px;top:403px;width:48px;height:13px;background:#C83A52"></div>
<div style="left:411px;top:403px;height:13px;line-height:13px;white-space:nowrap;color:#000;font-family:Liberation Mono,monospace;font-size:11.5px;width:48px;text-align:center;letter-spacing:0.5px">75.5</div>
<div style="left:460px;top:403px;width:48px;height:13px;background:#C83A52"></div>
<div style="left:460px;top:403px;height:13px;line-height:13px;white-space:nowrap;color:#000;font-family:Liberation Mono,monospace;font-size:11.5px;width:48px;text-align:center;letter-spacing:0.5px">75.5</div>
<div style="left:509px;top:403px;width:48px;height:13px;background:#C83A52"></div>
<div style="left:509px;top:403px;height:13px;line-height:13px;white-space:nowrap;color:#000;font-family:Liberation Mono,monospace;font-size:11.5px;width:48px;text-align:center;letter-spacing:0.5px">75.5</div>
<div style="left:558px;top:403px;width:48px;height:13px;background:#C83A52"></div>
<div style="left:558px;top:403px;height:13px;line-height:13px;white-space:nowrap;color:#000;font-family:Liberation Mono,monospace;font-size:11.5px;width:48px;text-align:center;letter-spacing:0.5px">75.5</div>
<div style="left:607px;top:403px;width:48px;height:13px;background:#72DC0A"></div>
<div style="left:607px;top:403px;height:13px;line-height:13px;white-space:nowrap;color:#000;font-family:Liberation Mono,monospace;font-size:11.5px;width:48px;text-align:center;letter-spacing:0.5px">0.0</div>
<div style="left:314px;top:417px;width:47px;height:13px;background:#B84A6A"></div>
<div style="left:314px;top:417px;height:13px;line-height:13px;white-space:nowrap;color:#000;font-family:Liberation Mono,monospace;font-size:11.5px;width:47px;text-align:center;letter-spacing:0.5px">70.0</div>
<div style="left:362px;top:417px;width:48px;height:13px;background:#B84A6A"></div>
<div style="left:362px;top:417px;height:13px;line-height:13px;white-space:nowrap;color:#000;font-family:Liberation Mono,monospace;font-size:11.5px;width:48px;text-align:center;letter-spacing:0.5px">70.0</div>
<div style="left:411px;top:417px;width:48px;height:13px;background:#B84A6A"></div>
<div style="left:411px;top:417px;height:13px;line-height:13px;white-space:nowrap;color:#000;font-family:Liberation Mono,monospace;font-size:11.5px;width:48px;text-align:center;letter-spacing:0.5px">70.0</div>
<div style="left:460px;top:417px;width:48px;height:13px;background:#B84A6A"></div>
<div style="left:460px;top:417px;height:13px;line-height:13px;white-space:nowrap;color:#000;font-family:Liberation Mono,monospace;font-size:11.5px;width:48px;text-align:center;letter-spacing:0.5px">70.0</div>
<div style="left:509px;top:417px;width:48px;height:13px;background:#B84A6A"></div>
<div style="left:509px;top:417px;height:13px;line-height:13px;white-space:nowrap;color:#000;font-family:Liberation Mono,monospace;font-size:11.5px;width:48px;text-align:center;letter-spacing:0.5px">70.0</div>
<div style="left:558px;top:417px;width:48px;height:13px;background:#B84A6A"></div>
<div style="left:558px;top:417px;height:13px;line-height:13px;white-space:nowrap;color:#000;font-family:Liberation Mono,monospace;font-size:11.5px;width:48px;text-align:center;letter-spacing:0.5px">70.0</div>
<div style="left:607px;top:417px;width:48px;height:13px;background:#72DC0A"></div>
<div style="left:607px;top:417px;height:13px;line-height:13px;white-space:nowrap;color:#000;font-family:Liberation Mono,monospace;font-size:11.5px;width:48px;text-align:center;letter-spacing:0.5px">0.0</div>
<div style="left:314px;top:431px;width:47px;height:13px;background:#B84A6A"></div>
<div style="left:314px;top:431px;height:13px;line-height:13px;white-space:nowrap;color:#000;font-family:Liberation Mono,monospace;font-size:11.5px;width:47px;text-align:center;letter-spacing:0.5px">70.0</div>
<div style="left:362px;top:431px;width:48px;height:13px;background:#B84A6A"></div>
<div style="left:362px;top:431px;height:13px;line-height:13px;white-space:nowrap;color:#000;font-family:Liberation Mono,monospace;font-size:11.5px;width:48px;text-align:center;letter-spacing:0.5px">70.0</div>
<div style="left:411px;top:431px;width:48px;height:13px;background:#B84A6A"></div>
<div style="left:411px;top:431px;height:13px;line-height:13px;white-space:nowrap;color:#000;font-family:Liberation Mono,monospace;font-size:11.5px;width:48px;text-align:center;letter-spacing:0.5px">70.0</div>
<div style="left:460px;top:431px;width:48px;height:13px;background:#A07D48"></div>
<div style="left:460px;top:431px;height:13px;line-height:13px;white-space:nowrap;color:#000;font-family:Liberation Mono,monospace;font-size:11.5px;width:48px;text-align:center;letter-spacing:0.5px">63.0</div>
<div style="left:509px;top:431px;width:48px;height:13px;background:#A07D48"></div>
<div style="left:509px;top:431px;height:13px;line-height:13px;white-space:nowrap;color:#000;font-family:Liberation Mono,monospace;font-size:11.5px;width:48px;text-align:center;letter-spacing:0.5px">63.0</div>
<div style="left:558px;top:431px;width:48px;height:13px;background:#A07D48"></div>
<div style="left:558px;top:431px;height:13px;line-height:13px;white-space:nowrap;color:#000;font-family:Liberation Mono,monospace;font-size:11.5px;width:48px;text-align:center;letter-spacing:0.5px">63.0</div>
<div style="left:607px;top:431px;width:48px;height:13px;background:#72DC0A"></div>
<div style="left:607px;top:431px;height:13px;line-height:13px;white-space:nowrap;color:#000;font-family:Liberation Mono,monospace;font-size:11.5px;width:48px;text-align:center;letter-spacing:0.5px">0.0</div>
<div style="left:314px;top:445px;width:47px;height:13px;background:#B06060"></div>
<div style="left:314px;top:445px;height:13px;line-height:13px;white-space:nowrap;color:#000;font-family:Liberation Mono,monospace;font-size:11.5px;width:47px;text-align:center;letter-spacing:0.5px">66.5</div>
<div style="left:362px;top:445px;width:48px;height:13px;background:#B06060"></div>
<div style="left:362px;top:445px;height:13px;line-height:13px;white-space:nowrap;color:#000;font-family:Liberation Mono,monospace;font-size:11.5px;width:48px;text-align:center;letter-spacing:0.5px">66.5</div>
<div style="left:411px;top:445px;width:48px;height:13px;background:#B06060"></div>
<div style="left:411px;top:445px;height:13px;line-height:13px;white-space:nowrap;color:#000;font-family:Liberation Mono,monospace;font-size:11.5px;width:48px;text-align:center;letter-spacing:0.5px">66.5</div>
<div style="left:460px;top:445px;width:48px;height:13px;background:#A5884A"></div>
<div style="left:460px;top:445px;height:13px;line-height:13px;white-space:nowrap;color:#000;font-family:Liberation Mono,monospace;font-size:11.5px;width:48px;text-align:center;letter-spacing:0.5px">62.0</div>
<div style="left:509px;top:445px;width:48px;height:13px;background:#A5884A"></div>
<div style="left:509px;top:445px;height:13px;line-height:13px;white-space:nowrap;color:#000;font-family:Liberation Mono,monospace;font-size:11.5px;width:48px;text-align:center;letter-spacing:0.5px">62.0</div>
<div style="left:558px;top:445px;width:48px;height:13px;background:#A5884A"></div>
<div style="left:558px;top:445px;height:13px;line-height:13px;white-space:nowrap;color:#000;font-family:Liberation Mono,monospace;font-size:11.5px;width:48px;text-align:center;letter-spacing:0.5px">62.0</div>
<div style="left:607px;top:445px;width:48px;height:13px;background:#72DC0A"></div>
<div style="left:607px;top:445px;height:13px;line-height:13px;white-space:nowrap;color:#000;font-family:Liberation Mono,monospace;font-size:11.5px;width:48px;text-align:center;letter-spacing:0.5px">0.0</div>
<div style="left:314px;top:459px;width:47px;height:13px;background:#A09A48"></div>
<div style="left:314px;top:459px;height:13px;line-height:13px;white-space:nowrap;color:#000;font-family:Liberation Mono,monospace;font-size:11.5px;width:47px;text-align:center;letter-spacing:0.5px">61.5</div>
<div style="left:362px;top:459px;width:48px;height:13px;background:#A09A48"></div>
<div style="left:362px;top:459px;height:13px;line-height:13px;white-space:nowrap;color:#000;font-family:Liberation Mono,monospace;font-size:11.5px;width:48px;text-align:center;letter-spacing:0.5px">61.5</div>
<div style="left:411px;top:459px;width:48px;height:13px;background:#A09A48"></div>
<div style="left:411px;top:459px;height:13px;line-height:13px;white-space:nowrap;color:#000;font-family:Liberation Mono,monospace;font-size:11.5px;width:48px;text-align:center;letter-spacing:0.5px">61.5</div>
<div style="left:460px;top:459px;width:48px;height:13px;background:#98A838"></div>
<div style="left:460px;top:459px;height:13px;line-height:13px;white-space:nowrap;color:#000;font-family:Liberation Mono,monospace;font-size:11.5px;width:48px;text-align:center;letter-spacing:0.5px">59.0</div>
<div style="left:509px;top:459px;width:48px;height:13px;background:#98A838"></div>
<div style="left:509px;top:459px;height:13px;line-height:13px;white-space:nowrap;color:#000;font-family:Liberation Mono,monospace;font-size:11.5px;width:48px;text-align:center;letter-spacing:0.5px">59.0</div>
<div style="left:558px;top:459px;width:48px;height:13px;background:#98A838"></div>
<div style="left:558px;top:459px;height:13px;line-height:13px;white-space:nowrap;color:#000;font-family:Liberation Mono,monospace;font-size:11.5px;width:48px;text-align:center;letter-spacing:0.5px">59.0</div>
<div style="left:607px;top:459px;width:48px;height:13px;background:#72DC0A"></div>
<div style="left:607px;top:459px;height:13px;line-height:13px;white-space:nowrap;color:#000;font-family:Liberation Mono,monospace;font-size:11.5px;width:48px;text-align:center;letter-spacing:0.5px">0.0</div>
<div style="left:314px;top:473px;width:47px;height:13px;background:#6CE048"></div>
<div style="left:314px;top:473px;height:13px;line-height:13px;white-space:nowrap;color:#000;font-family:Liberation Mono,monospace;font-size:11.5px;width:47px;text-align:center;letter-spacing:0.5px">51.0</div>
<div style="left:362px;top:473px;width:48px;height:13px;background:#6CE048"></div>
<div style="left:362px;top:473px;height:13px;line-height:13px;white-space:nowrap;color:#000;font-family:Liberation Mono,monospace;font-size:11.5px;width:48px;text-align:center;letter-spacing:0.5px">51.0</div>
<div style="left:411px;top:473px;width:48px;height:13px;background:#6CE048"></div>
<div style="left:411px;top:473px;height:13px;line-height:13px;white-space:nowrap;color:#000;font-family:Liberation Mono,monospace;font-size:11.5px;width:48px;text-align:center;letter-spacing:0.5px">51.0</div>
<div style="left:460px;top:473px;width:48px;height:13px;background:#6CE048"></div>
<div style="left:460px;top:473px;height:13px;line-height:13px;white-space:nowrap;color:#000;font-family:Liberation Mono,monospace;font-size:11.5px;width:48px;text-align:center;letter-spacing:0.5px">51.0</div>
<div style="left:509px;top:473px;width:48px;height:13px;background:#2C80C8"></div>
<div style="left:509px;top:473px;height:13px;line-height:13px;white-space:nowrap;color:#FFFFFF;font-family:Liberation Mono,monospace;font-size:11.5px;width:48px;text-align:center;letter-spacing:0.5px">51.0</div>
<div style="left:558px;top:473px;width:48px;height:13px;background:#6CE048"></div>
<div style="left:558px;top:473px;height:13px;line-height:13px;white-space:nowrap;color:#000;font-family:Liberation Mono,monospace;font-size:11.5px;width:48px;text-align:center;letter-spacing:0.5px">51.0</div>
<div style="left:607px;top:473px;width:48px;height:13px;background:#72DC0A"></div>
<div style="left:607px;top:473px;height:13px;line-height:13px;white-space:nowrap;color:#000;font-family:Liberation Mono,monospace;font-size:11.5px;width:48px;text-align:center;letter-spacing:0.5px">0.0</div>
<div style="left:314px;top:487px;width:47px;height:13px;background:#3E9070"></div>
<div style="left:314px;top:487px;height:13px;line-height:13px;white-space:nowrap;color:#000;font-family:Liberation Mono,monospace;font-size:11.5px;width:47px;text-align:center;letter-spacing:0.5px">35.5</div>
<div style="left:362px;top:487px;width:48px;height:13px;background:#3E9070"></div>
<div style="left:362px;top:487px;height:13px;line-height:13px;white-space:nowrap;color:#000;font-family:Liberation Mono,monospace;font-size:11.5px;width:48px;text-align:center;letter-spacing:0.5px">35.5</div>
<div style="left:411px;top:487px;width:48px;height:13px;background:#3E9070"></div>
<div style="left:411px;top:487px;height:13px;line-height:13px;white-space:nowrap;color:#000;font-family:Liberation Mono,monospace;font-size:11.5px;width:48px;text-align:center;letter-spacing:0.5px">35.5</div>
<div style="left:460px;top:487px;width:48px;height:13px;background:#30C8C0"></div>
<div style="left:460px;top:487px;height:13px;line-height:13px;white-space:nowrap;color:#000;font-family:Liberation Mono,monospace;font-size:11.5px;width:48px;text-align:center;letter-spacing:0.5px">43.0</div>
<div style="left:509px;top:487px;width:48px;height:13px;background:#30C8C0"></div>
<div style="left:509px;top:487px;height:13px;line-height:13px;white-space:nowrap;color:#000;font-family:Liberation Mono,monospace;font-size:11.5px;width:48px;text-align:center;letter-spacing:0.5px">43.0</div>
<div style="left:558px;top:487px;width:48px;height:13px;background:#30C8C0"></div>
<div style="left:558px;top:487px;height:13px;line-height:13px;white-space:nowrap;color:#000;font-family:Liberation Mono,monospace;font-size:11.5px;width:48px;text-align:center;letter-spacing:0.5px">43.0</div>
<div style="left:607px;top:487px;width:48px;height:13px;background:#72DC0A"></div>
<div style="left:607px;top:487px;height:13px;line-height:13px;white-space:nowrap;color:#000;font-family:Liberation Mono,monospace;font-size:11.5px;width:48px;text-align:center;letter-spacing:0.5px">0.0</div>
<div style="left:314px;top:501px;width:47px;height:13px;background:#606A10"></div>
<div style="left:314px;top:501px;height:13px;line-height:13px;white-space:nowrap;color:#000;font-family:Liberation Mono,monospace;font-size:11.5px;width:47px;text-align:center;letter-spacing:0.5px">31.0</div>
<div style="left:362px;top:501px;width:48px;height:13px;background:#606A10"></div>
<div style="left:362px;top:501px;height:13px;line-height:13px;white-space:nowrap;color:#000;font-family:Liberation Mono,monospace;font-size:11.5px;width:48px;text-align:center;letter-spacing:0.5px">31.0</div>
<div style="left:411px;top:501px;width:48px;height:13px;background:#606A10"></div>
<div style="left:411px;top:501px;height:13px;line-height:13px;white-space:nowrap;color:#000;font-family:Liberation Mono,monospace;font-size:11.5px;width:48px;text-align:center;letter-spacing:0.5px">31.0</div>
<div style="left:460px;top:501px;width:48px;height:13px;background:#28A8B8"></div>
<div style="left:460px;top:501px;height:13px;line-height:13px;white-space:nowrap;color:#000;font-family:Liberation Mono,monospace;font-size:11.5px;width:48px;text-align:center;letter-spacing:0.5px">38.0</div>
<div style="left:509px;top:501px;width:48px;height:13px;background:#28A8B8"></div>
<div style="left:509px;top:501px;height:13px;line-height:13px;white-space:nowrap;color:#000;font-family:Liberation Mono,monospace;font-size:11.5px;width:48px;text-align:center;letter-spacing:0.5px">38.0</div>
<div style="left:558px;top:501px;width:48px;height:13px;background:#28A8B8"></div>
<div style="left:558px;top:501px;height:13px;line-height:13px;white-space:nowrap;color:#000;font-family:Liberation Mono,monospace;font-size:11.5px;width:48px;text-align:center;letter-spacing:0.5px">38.0</div>
<div style="left:607px;top:501px;width:48px;height:13px;background:#72DC0A"></div>
<div style="left:607px;top:501px;height:13px;line-height:13px;white-space:nowrap;color:#000;font-family:Liberation Mono,monospace;font-size:11.5px;width:48px;text-align:center;letter-spacing:0.5px">0.0</div>
<div style="left:314px;top:515px;width:47px;height:13px;background:#607018"></div>
<div style="left:314px;top:515px;height:13px;line-height:13px;white-space:nowrap;color:#000;font-family:Liberation Mono,monospace;font-size:11.5px;width:47px;text-align:center;letter-spacing:0.5px">29.0</div>
<div style="left:362px;top:515px;width:48px;height:13px;background:#607018"></div>
<div style="left:362px;top:515px;height:13px;line-height:13px;white-space:nowrap;color:#000;font-family:Liberation Mono,monospace;font-size:11.5px;width:48px;text-align:center;letter-spacing:0.5px">29.0</div>
<div style="left:411px;top:515px;width:48px;height:13px;background:#607018"></div>
<div style="left:411px;top:515px;height:13px;line-height:13px;white-space:nowrap;color:#000;font-family:Liberation Mono,monospace;font-size:11.5px;width:48px;text-align:center;letter-spacing:0.5px">29.0</div>
<div style="left:460px;top:515px;width:48px;height:13px;background:#309898"></div>
<div style="left:460px;top:515px;height:13px;line-height:13px;white-space:nowrap;color:#000;font-family:Liberation Mono,monospace;font-size:11.5px;width:48px;text-align:center;letter-spacing:0.5px">36.0</div>
<div style="left:509px;top:515px;width:48px;height:13px;background:#309898"></div>
<div style="left:509px;top:515px;height:13px;line-height:13px;white-space:nowrap;color:#000;font-family:Liberation Mono,monospace;font-size:11.5px;width:48px;text-align:center;letter-spacing:0.5px">36.0</div>
<div style="left:558px;top:515px;width:48px;height:13px;background:#309898"></div>
<div style="left:558px;top:515px;height:13px;line-height:13px;white-space:nowrap;color:#000;font-family:Liberation Mono,monospace;font-size:11.5px;width:48px;text-align:center;letter-spacing:0.5px">36.0</div>
<div style="left:607px;top:515px;width:48px;height:13px;background:#72DC0A"></div>
<div style="left:607px;top:515px;height:13px;line-height:13px;white-space:nowrap;color:#000;font-family:Liberation Mono,monospace;font-size:11.5px;width:48px;text-align:center;letter-spacing:0.5px">0.0</div>
<div style="left:312px;top:534px;width:345px;height:13px;background:#A19F98"></div>
<div style="left:312px;top:534px;height:13px;line-height:13px;white-space:nowrap;color:#F0F0F0;width:345px;text-align:center">%</div>
</body></html>
